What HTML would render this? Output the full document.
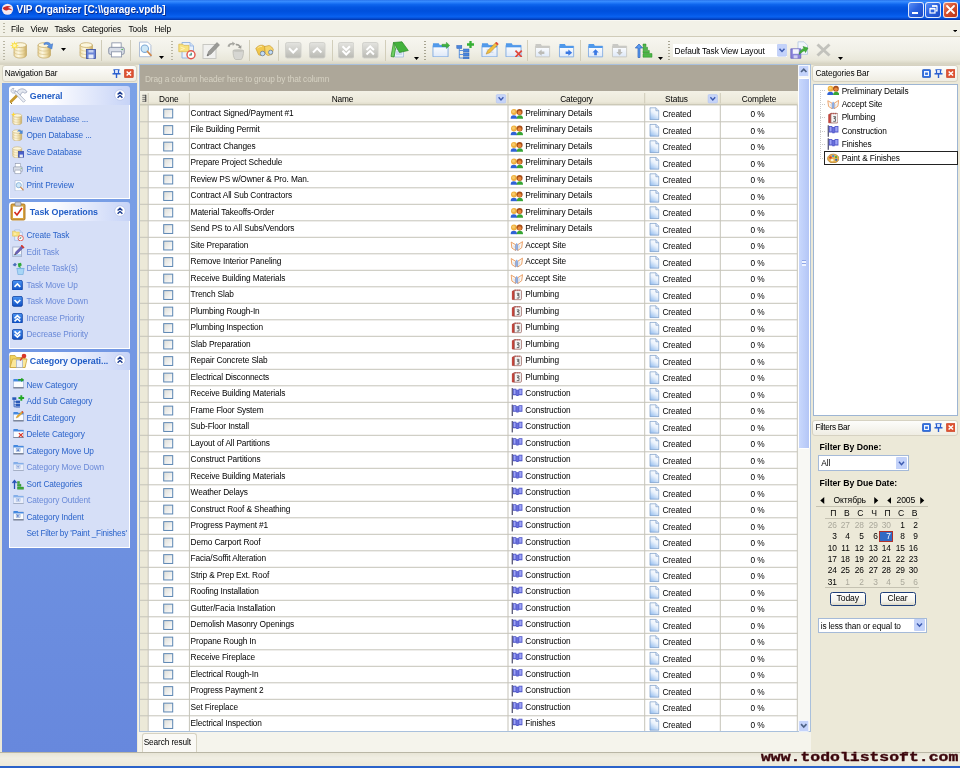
<!DOCTYPE html><html><head><meta charset="utf-8"><title>VIP Organizer</title>
<style>
*{box-sizing:border-box;margin:0;padding:0}
html,body{width:960px;height:768px;overflow:hidden;background:#ece9d8}
body{font-family:"Liberation Sans",sans-serif;font-size:8.3px;color:#000;position:relative;letter-spacing:-0.12px}
.ab{position:absolute}
.t{position:absolute;white-space:nowrap;line-height:10px}
.lnk{color:#2a63ca}.dis{color:#6a8ad8}
.hl{position:absolute;height:1px;background:#c9c7ba}
.vl{position:absolute;width:1px;background:#c9c7ba}
.cb{position:absolute;width:10px;height:10px;border:1px solid #5580a8;background:linear-gradient(135deg,#dcdcd7,#ffffff)}
#root{position:absolute;left:0;top:0;width:960px;height:768px;will-change:transform;overflow:hidden}
</style></head><body><div id="root">

<svg width="0" height="0" style="position:absolute">
<defs>
<linearGradient id="gDb" x1="0" x2="1"><stop offset="0" stop-color="#f0deaa"/><stop offset=".35" stop-color="#fdf8e2"/><stop offset=".7" stop-color="#ecd9a2"/><stop offset="1" stop-color="#c9ac64"/></linearGradient>
<linearGradient id="gDoc" x1=".7" y1="0" x2=".2" y2="1"><stop offset="0" stop-color="#ffffff"/><stop offset=".45" stop-color="#eaf2fc"/><stop offset="1" stop-color="#98c0f0"/></linearGradient>
<linearGradient id="gCb" x1="0" y1="0" x2="1" y2="1"><stop offset="0" stop-color="#dcdcd6"/><stop offset="1" stop-color="#ffffff"/></linearGradient>
<linearGradient id="gBtnB" x1="0" y1="0" x2="0" y2="1"><stop offset="0" stop-color="#4a94f4"/><stop offset="1" stop-color="#0f50c4"/></linearGradient>
<linearGradient id="gBtnG" x1="0" y1="0" x2="0" y2="1"><stop offset="0" stop-color="#e4e4e0"/><stop offset="1" stop-color="#b9b9b3"/></linearGradient>
<symbol id="i-ct" viewBox="0 0 18 19"><path d="M4 1.500h8l3.500 3.500v12H4z" fill="#e9f1fc" stroke="#8fb0e0" stroke-width=".9"/><path d="M12 1.500V5h3.500" fill="#cfe0f6" stroke="#8fb0e0" stroke-width=".7"/><path d="M.8 3.200h4l1 1.200h5.200v6.300H.8z" fill="#f8e27e" stroke="#d8b648" stroke-width=".7"/><path d="M2.500 6l4 1.500-4 1.500" fill="none" stroke="#fdf4c0" stroke-width="1"/><circle cx="13" cy="13.800" r="4" fill="#fff" stroke="#e2554a" stroke-width="1.400"/><path d="M13.200 11.800v2.200h-2" fill="none" stroke="#2f7a6a" stroke-width="1.100"/></symbol>
<symbol id="i-doc" viewBox="0 0 10 13"><path d="M.5.5h6l3 3v9h-9z" fill="url(#gDoc)" stroke="#7f9fc8" stroke-width=".9"/><path d="M6.5.5v3h3" fill="#dbe8f8" stroke="#7f9fc8" stroke-width=".7"/></symbol>
<symbol id="i-pd" viewBox="0 0 13 11"><path d="M.2 10.600c0-2.600 1.300-3.600 3.300-3.600s3.300 1 3.300 3.600z" fill="#2f62d6"/><path d="M6.400 10.600c0-2.600 1.200-3.600 3.100-3.600s3.300 1 3.300 3.600z" fill="#36a534"/><circle cx="3.700" cy="3.800" r="3" fill="#eeb040"/><circle cx="3.200" cy="3.300" r="1.500" fill="#f8cc6c"/><circle cx="9.300" cy="3.800" r="3" fill="#a84e18"/><circle cx="9.300" cy="4.500" r="1.900" fill="#e8863a"/></symbol>
<symbol id="i-as" viewBox="0 0 13 11"><path d="M.8 1.800 5.400 4.500v5.800L1.600 7.800z" fill="#fdf8f0" stroke="#e8975a" stroke-width=".9"/><path d="M12.200 1.400 7.400 4.500v5.800l4-2.800z" fill="#fdf8f0" stroke="#e8975a" stroke-width=".9"/><path d="M5.400 4.500 6.400 3l1 1.500v5.800l-1-1-1 1z" fill="#8fb2ea" stroke="#6c94d8" stroke-width=".4"/><path d="M3 4.800 4.600 6v2.400L3.400 7.500z" fill="#cfe0f8"/><path d="M9.800 4.600 8.200 6v2.400l1.400-1z" fill="#cfe0f8"/></symbol>
<symbol id="i-pl" viewBox="0 0 11 12"><path d="M.6 2.400 3 1.200v10L.6 11z" fill="#c8453c" stroke="#a8352c" stroke-width=".5"/><path d="M3 1.200h6.400c.6 0 1 .4 1 1v8c0 .6-.4 1-1 1H3z" fill="#f6f6f6" stroke="#8a4a44" stroke-width=".7"/><path d="M4 .6v1.600M6 .6v1.600M8 .6v1.600" stroke="#b03a32" stroke-width=".8"/><path d="M5.500 4.500h2.400v1.400H6.300v.8h1.600v2.800H5.500" fill="none" stroke="#444" stroke-width=".8"/></symbol>
<symbol id="i-fl" viewBox="0 0 12 12"><rect x=".7" y=".3" width="1.100" height="11.500" fill="#3a3a5c"/><path d="M1.800 1h3.500v.9h2.300V1h3.800v6.400H7.600v.9H5.300v-.9H1.800z" fill="#4a50c4"/><path d="M2.600 1.800h2v4.800h-2zM8.200 1.800h2.400v4.800H8.200z" fill="#9da3f6"/><path d="M5.300 2.500h2.300v5H5.300z" fill="#6a70dc"/></symbol>
<symbol id="i-pa" viewBox="0 0 13 11"><ellipse cx="6.5" cy="5.8" rx="6" ry="4.6" fill="#e8b252" stroke="#a87420" stroke-width=".7"/><circle cx="3.6" cy="4.6" r="1.3" fill="#d43a2a"/><circle cx="6.4" cy="3.2" r="1.2" fill="#3f8fdc"/><circle cx="9.4" cy="4.3" r="1.2" fill="#43a83c"/><circle cx="9.6" cy="7.2" r="1.2" fill="#2f5fb5"/><ellipse cx="5.4" cy="7.5" rx="1.6" ry="1.1" fill="#fff6dc"/></symbol>
<symbol id="i-db" viewBox="0 0 14 16"><path d="M1 3v9.800c0 1.500 2.700 2.700 6 2.700s6-1.200 6-2.700V3z" fill="url(#gDb)" stroke="#c4a862" stroke-width=".7"/><ellipse cx="7" cy="3" rx="6" ry="2.300" fill="#fcf6dc" stroke="#c4a862" stroke-width=".7"/><path d="M1 6.300c0 1.400 2.700 2.500 6 2.500s6-1.100 6-2.500M1 9.600c0 1.400 2.700 2.500 6 2.500s6-1.100 6-2.500" fill="none" stroke="#d2ba7c" stroke-width=".55"/></symbol>
<symbol id="i-pr" viewBox="0 0 16 15" preserveAspectRatio="none"><rect x="3.6" y=".8" width="8.8" height="5.4" fill="#fff" stroke="#8a93a8" stroke-width=".8"/><rect x=".7" y="5" width="14.6" height="6.6" rx="1.6" fill="#d9dee8" stroke="#7b859c" stroke-width=".8"/><rect x="3.2" y="9.2" width="9.6" height="4.8" fill="#fff" stroke="#8a93a8" stroke-width=".8"/><circle cx="13.3" cy="7" r=".7" fill="#3fae3c"/></symbol>
<symbol id="i-pv" viewBox="0 0 15 16"><path d="M1.5.6h8.2l3.2 3.2v11.4H1.5z" fill="#fff" stroke="#9db0cf" stroke-width=".8"/><circle cx="6.8" cy="7.2" r="3.7" fill="#cfe8f7" stroke="#7da9d6" stroke-width="1.1"/><path d="M9.5 10 13 13.8" stroke="#d08a4c" stroke-width="1.8" stroke-linecap="round"/></symbol>
<symbol id="i-fold" viewBox="0 0 14 12"><path d="M.6 2.6h12.8v8.8H.6z" fill="#fff" stroke="#6d92c9" stroke-width=".8"/><path d="M.6 1.2h5.2l1 1.4H.6z" fill="#3f7ad6"/><path d="M.6 2.6h12.8v1.6H.6z" fill="#3f7ad6"/></symbol>
<symbol id="i-sqb" viewBox="0 0 12 12"><rect x=".5" y=".5" width="11" height="11" rx="1.6" fill="url(#gBtnB)" stroke="#1848a8" stroke-width=".8"/></symbol>
<symbol id="i-sqg" viewBox="0 0 12 12"><rect x=".5" y=".5" width="11" height="11" rx="1.6" fill="url(#gBtnG)" stroke="#a5a59e" stroke-width=".8"/></symbol>
</defs></svg>

<div class="ab" style="left:0;top:0;width:960px;height:19.500px;background:linear-gradient(#2670ea 0%,#3a8eff 6%,#2a80fb 12%,#0f66ee 22%,#0356e2 36%,#0050dc 55%,#0256e6 70%,#0a62f0 84%,#0650d8 91%,#0234a8 100%)"></div>
<svg class="ab" style="left:1.200px;top:2.800px" width="13" height="12.500" viewBox="0 0 13 13"><circle cx="6.500" cy="6.500" r="5.800" fill="#f6e9ee"/><path d="M1.5 5.5c2-2.6 6-3.4 9.5-1.2-1.6-.2-3 .1-4 .9 2 .2 3.6 1 4.6 2.6-1.8-.9-3.6-1-5.2-.3-1.8.8-3.4.2-4.9-2z" fill="#cc2a2a"/></svg>
<div class="t" style="left:16.500px;top:4px;font-size:10px;line-height:12px;font-weight:bold;color:#fff;letter-spacing:-0.040px;text-shadow:0.7px 0.7px 0 #0a2a8a">VIP Organizer [C:\\garage.vpdb]</div>
<div class="ab" style="left:908px;top:1.500px;width:15.700px;height:16.200px;border:1px solid rgba(255,255,255,.85);border-radius:3px;background:linear-gradient(135deg,#5a8ff5,#2a62e0 45%,#1b4ac4)"></div>
<div class="ab" style="left:925.3px;top:1.500px;width:15.700px;height:16.200px;border:1px solid rgba(255,255,255,.85);border-radius:3px;background:linear-gradient(135deg,#5a8ff5,#2a62e0 45%,#1b4ac4)"></div>
<div class="ab" style="left:942.7px;top:1.500px;width:15.700px;height:16.200px;border:1px solid rgba(255,255,255,.85);border-radius:3px;background:linear-gradient(135deg,#e9866a,#d4502e 45%,#b9351a)"></div>
<div class="ab" style="left:912px;top:11.500px;width:6px;height:2.500px;background:#fff"></div>
<svg class="ab" style="left:925.800px;top:2px" width="15" height="15" viewBox="0 0 15 15"><path d="M6 4.2h5v4.6H9.6" fill="none" stroke="#fff" stroke-width="1.2"/><path d="M6 3.9h5" stroke="#fff" stroke-width="1.4"/><rect x="4" y="6.6" width="5" height="4.4" fill="none" stroke="#fff" stroke-width="1.2"/><path d="M4 6.6h5" stroke="#fff" stroke-width="1.6"/></svg>
<svg class="ab" style="left:943.100px;top:2.100px" width="15" height="15" viewBox="0 0 15 15"><path d="M4 4l7 7M11 4l-7 7" stroke="#fff" stroke-width="1.800" stroke-linecap="round"/></svg>
<div class="ab" style="left:0;top:19.500px;width:960px;height:16.500px;background:#f2f1e7"></div>
<div class="ab" style="left:0;top:35.500px;width:960px;height:1px;background:#d0ccb9"></div><div class="ab" style="left:0;top:19.500px;width:960px;height:1px;background:#f9f8f2"></div>
<div class="ab" style="left:3px;top:23px;width:2px;height:11px;background:repeating-linear-gradient(#b9b6a4 0 1px,transparent 1px 3px)"></div>
<div class="t" style="left:11px;top:23.5px">File</div>
<div class="t" style="left:30.5px;top:23.5px">View</div>
<div class="t" style="left:54.5px;top:23.5px">Tasks</div>
<div class="t" style="left:82px;top:23.5px">Categories</div>
<div class="t" style="left:128.5px;top:23.5px">Tools</div>
<div class="t" style="left:154.5px;top:23.5px">Help</div>
<svg class="ab" style="left:952.500px;top:30px" width="4.200" height="2.300" viewBox="0 0 6 3.200"><path d="M0 0h6L3 3.200z" fill="#000"/></svg>
<div class="ab" style="left:0;top:37px;width:960px;height:26.500px;background:linear-gradient(#f7f6f0,#f1f0e7 50%,#e9e7da 85%,#d6d3c2)"></div>
<div class="ab" style="left:0;top:63.500px;width:960px;height:1.500px;background:linear-gradient(#cdc9b6,#e4e1d2)"></div>
<div class="ab" style="left:3px;top:41px;width:2px;height:19px;background:repeating-linear-gradient(#b9b6a4 0 1px,transparent 1px 3px)"></div>
<svg class="ab" style="left:12.5px;top:40.8px" width="14.5" height="18.5" ><use href="#i-db"/></svg>
<svg class="ab" style="left:9.500px;top:40.500px" width="9" height="9" viewBox="0 0 9 9"><path d="M4.500 0l.8 2.400L7.700 1.300 6.600 3.700 9 4.500l-2.400.8 1.100 2.400-2.400-1.100L4.500 9l-.8-2.400-2.400 1.100 1.100-2.400L0 4.500l2.400-.8L1.300 1.300l2.400 1.100z" fill="#fbe04a"/><circle cx="4.500" cy="4.500" r="1.600" fill="#fff6b0"/></svg>
<svg class="ab" style="left:36.5px;top:40.8px" width="14.5" height="18.5" ><use href="#i-db"/></svg>
<svg class="ab" style="left:43px;top:40.500px" width="10.500" height="10" viewBox="0 0 10.500 10"><path d="M.8 2.600C3.200.6 6.200 1 8 3.500l1.700-.8-.9 5.300L4.300 5.800l1.700-.9C4.800 3.200 3 2.600 1.200 3.800z" fill="#5a92e0" stroke="#3a6cc0" stroke-width=".5"/></svg>
<svg class="ab" style="left:61px;top:48px" width="5" height="3" viewBox="0 0 5 3"><path d="M0 0h5L2.500 3z" fill="#000"/></svg>
<svg class="ab" style="left:79px;top:40.8px" width="14.5" height="18.5" ><use href="#i-db"/></svg>
<svg class="ab" style="left:86px;top:49px" width="10" height="10" viewBox="0 0 10 10"><rect x=".5" y=".5" width="9" height="9" fill="#6d86d8" stroke="#3b4fa0" stroke-width=".8"/><rect x="2.500" y="5.500" width="5" height="4" fill="#e8ecf8"/><rect x="2.500" y="1" width="5" height="2.500" fill="#c5d0f0"/></svg>
<div class="vl" style="left:101px;top:40px;height:21px;background:#cfcbb8"></div>
<svg class="ab" style="left:108px;top:42px" width="17" height="16" ><use href="#i-pr"/></svg>
<div class="vl" style="left:130px;top:40px;height:21px;background:#cfcbb8"></div>
<svg class="ab" style="left:138px;top:41px" width="15" height="17" ><use href="#i-pv"/></svg>
<svg class="ab" style="left:159px;top:56px" width="5" height="3" viewBox="0 0 5 3"><path d="M0 0h5L2.500 3z" fill="#000"/></svg>
<div class="ab" style="left:171px;top:41px;width:2px;height:19px;background:repeating-linear-gradient(#b9b6a4 0 1px,transparent 1px 3px)"></div>
<div class="ab" style="left:2px;top:65px;width:135px;height:17px;border:1px solid #d6d2c2;border-radius:3px;background:linear-gradient(#fdfdfb,#efede3)"></div><div class="t" style="left:4.7px;top:68px">Navigation Bar</div>
<svg class="ab" style="left:112.2px;top:68.7px" width="9" height="9.500" viewBox="0 0 9 9.500"><path d="M1.400 .9h6.200" fill="none" stroke="#2a5fcf" stroke-width="1.300"/><path d="M2.500 1v3.500h4V1" fill="#dfe8fb" stroke="#2a5fcf" stroke-width="1.200"/><path d="M.5 4.800h8" stroke="#2a5fcf" stroke-width="1.500"/><path d="M4.500 5v4.300" fill="none" stroke="#2a5fcf" stroke-width="1.400"/></svg>
<svg class="ab" style="left:124px;top:69px" width="9.700" height="9" viewBox="0 0 10 10" preserveAspectRatio="none"><rect x=".3" y=".3" width="9.400" height="9.400" rx="1.200" fill="#de5232" stroke="#c23a1c" stroke-width=".6"/><path d="M2.700 2.700l4.600 4.600M7.300 2.700l-4.600 4.600" stroke="#fff" stroke-width="1.500"/></svg>
<div class="ab" style="left:2px;top:83px;width:135px;height:669px;background:linear-gradient(#7ba2e7,#6788dd)"></div>
<div class="ab" style="left:9px;top:86.3px;width:121px;height:18.500px;border-radius:3px 3px 0 0;background:linear-gradient(90deg,#ffffff 0%,#fdfdff 35%,#c6d3f7 100%)"></div><div class="ab" style="left:9px;top:104.8px;width:121px;height:94.2px;background:#d6dff7;border:1px solid #fff;border-top:none"></div><div class="t" style="left:29.800px;top:91.0px;font-weight:bold;color:#215dc6;font-size:8.900px;letter-spacing:-0.050px">General</div><svg class="ab" style="left:113.500px;top:88.8px" width="12" height="12" viewBox="0 0 12 12"><circle cx="6" cy="6" r="5.300" fill="#fff" stroke="#b5c3ea" stroke-width=".8"/><path d="M3.600 5.600 6 3.200l2.400 2.400M3.600 8.800 6 6.400l2.400 2.400" fill="none" stroke="#1c3c90" stroke-width="1.400"/></svg>
<svg class="ab" style="left:8.500px;top:86.500px" width="19" height="19" viewBox="0 0 19 19"><path d="M2 14.500 8.500 8" stroke="#c89a2e" stroke-width="2.800" stroke-linecap="round"/><path d="M1.500 15.500 3 17" stroke="#8a6a18" stroke-width="1"/><path d="M7.500 5.500c1.500-3 4.500-4.300 7.500-3.300 1.500.5 2.600 1.600 3 2.800l-2.200 1.300c-.8-.9-1.800-1.300-2.800-1l-2.300 3.700z" fill="#e4e8f0" stroke="#8f9ab4" stroke-width=".7"/><path d="M5 5.500l9.500 9.800 1.800-1.800L7 4z" fill="#eef1f6" stroke="#9aa4bc" stroke-width=".7"/><path d="M2 3.500c0-1.500 1.500-2.500 3-2l-1.200 1.600 1 1.200 1.800-.8c.3 1.500-1 2.800-2.500 2.600-1.200-.2-2.100-1.300-2.100-2.600z" fill="#eef1f6" stroke="#9aa4bc" stroke-width=".7"/></svg>
<div class="t lnk" style="left:26.500px;top:114px">New Database ...</div>
<svg class="ab" style="left:12.2px;top:112.7px" width="10.5" height="12.5" ><use href="#i-db"/></svg>
<div class="t lnk" style="left:26.500px;top:130px">Open Database ...</div>
<svg class="ab" style="left:12.2px;top:128.7px" width="10.5" height="12.5" ><use href="#i-db"/></svg>
<div class="t lnk" style="left:26.500px;top:147px">Save Database</div>
<svg class="ab" style="left:12.2px;top:145.7px" width="10.5" height="12.5" ><use href="#i-db"/></svg>
<div class="t lnk" style="left:26.500px;top:164px">Print</div>
<svg class="ab" style="left:13px;top:163.2px" width="9.8" height="11.5" preserveAspectRatio="none"><use href="#i-pr"/></svg>
<div class="t lnk" style="left:26.500px;top:180px">Print Preview</div>
<svg class="ab" style="left:13.5px;top:179.8px" width="10.5" height="11.5" ><use href="#i-pv"/></svg>
<svg class="ab" style="left:10.500px;top:112px" width="5" height="5" viewBox="0 0 8 8"><path d="M4 0l1 2.800L8 4 5 5.200 4 8 3 5.200 0 4l3-1.200z" fill="#ffd93a"/></svg>
<svg class="ab" style="left:17px;top:128.500px" width="6" height="6" viewBox="0 0 10 10"><path d="M.5 4c2-3 5-3 6.500-.5L9 2.500v5H4l2-1.800C5 4 3 3.500 .5 4z" fill="#4f8fe0" stroke="#2b62b8" stroke-width=".5"/></svg>
<svg class="ab" style="left:17.500px;top:151px" width="6.500" height="6.500" viewBox="0 0 10 10"><rect x=".5" y=".5" width="9" height="9" fill="#4a5fc8" stroke="#2b3f90" stroke-width=".8"/><rect x="2.500" y="5.500" width="5" height="4" fill="#e8ecf8"/></svg>
<div class="ab" style="left:9px;top:202.3px;width:121px;height:18.500px;border-radius:3px 3px 0 0;background:linear-gradient(90deg,#ffffff 0%,#fdfdff 35%,#c6d3f7 100%)"></div><div class="ab" style="left:9px;top:220.8px;width:121px;height:128.2px;background:#d6dff7;border:1px solid #fff;border-top:none"></div><div class="t" style="left:29.800px;top:207.0px;font-weight:bold;color:#215dc6;font-size:8.900px;letter-spacing:-0.050px">Task Operations</div><svg class="ab" style="left:113.500px;top:204.8px" width="12" height="12" viewBox="0 0 12 12"><circle cx="6" cy="6" r="5.300" fill="#fff" stroke="#b5c3ea" stroke-width=".8"/><path d="M3.600 5.600 6 3.200l2.400 2.400M3.600 8.800 6 6.400l2.400 2.400" fill="none" stroke="#1c3c90" stroke-width="1.400"/></svg>
<svg class="ab" style="left:9.500px;top:201px" width="16" height="20" viewBox="0 0 16 20"><rect x="1" y="3" width="14" height="16" rx="1.200" fill="#d9a441" stroke="#a87420" stroke-width=".9"/><rect x="3" y="5.500" width="10" height="11.500" fill="#fff"/><rect x="5" y="1" width="6" height="4" rx="1" fill="#c9ccd4" stroke="#777" stroke-width=".6"/><path d="M4.500 11l2.500 3 5-7" fill="none" stroke="#d22a1c" stroke-width="1.600"/></svg>
<div class="t lnk" style="left:26.500px;top:230px">Create Task</div>
<div class="t dis" style="left:26.500px;top:247px">Edit Task</div>
<div class="t dis" style="left:26.500px;top:263px">Delete Task(s)</div>
<div class="t dis" style="left:26.500px;top:280px">Task Move Up</div>
<div class="t dis" style="left:26.500px;top:296px">Task Move Down</div>
<div class="t dis" style="left:26.500px;top:313px">Increase Priority</div>
<div class="t dis" style="left:26.500px;top:329px">Decrease Priority</div>
<svg class="ab" style="left:11.8px;top:228.5px" width="12" height="12.7" ><use href="#i-ct"/></svg>
<svg class="ab" style="left:12px;top:245px" width="12.500" height="12.500" viewBox="0 0 12.500 12.500"><rect x=".8" y="2" width="8.600" height="9.600" fill="#f7f9fd" stroke="#9aa6c4" stroke-width=".8"/><rect x="1.200" y="9" width="7.800" height="2.200" fill="#b8d4f2"/><path d="M2.500 10 3.600 7 9.800 .8l1.700 1.700L5.300 8.700z" fill="#6a62b8" stroke="#4a4488" stroke-width=".4"/><path d="M2.500 10l1.600-.5-1-1z" fill="#7a5a2a"/><path d="M9.800 .8l1.700 1.700" stroke="#d8372a" stroke-width="1.700" stroke-linecap="round"/></svg>
<svg class="ab" style="left:11.500px;top:261.500px" width="13" height="13" viewBox="0 0 13 13"><path d="M5 6.500h7l-.9 6H5.900z" fill="#a8d6f6" stroke="#6aa6dc" stroke-width=".6"/><path d="M4.600 6.500h7.800" stroke="#7ab2e2" stroke-width="1.100"/><path d="M.5 3 3 .8l1.800 1.700L3.200 4.400z" fill="#4a6eb8"/><path d="M5.800 1.500 9 .8l.8 2.800-1.500.5.500 1.800-2.400-.8z" fill="#2fa83a"/></svg>
<svg class="ab" style="left:12.3px;top:279.5px" width="10.800" height="10.800" viewBox="0 0 12 12"><rect x=".5" y=".5" width="11" height="11" rx="1.500" fill="url(#gBtnB)" stroke="#0d3f9e" stroke-width=".9"/><path d="M2.800 7.600 6 4.400l3.200 3.200" fill="none" stroke="#fff" stroke-width="1.800"/></svg>
<svg class="ab" style="left:12.3px;top:296px" width="10.800" height="10.800" viewBox="0 0 12 12"><rect x=".5" y=".5" width="11" height="11" rx="1.500" fill="url(#gBtnB)" stroke="#0d3f9e" stroke-width=".9"/><path d="M2.800 4.400 6 7.600l3.200-3.200" fill="none" stroke="#fff" stroke-width="1.800"/></svg>
<svg class="ab" style="left:12.3px;top:312.6px" width="10.800" height="10.800" viewBox="0 0 12 12"><rect x=".5" y=".5" width="11" height="11" rx="1.500" fill="url(#gBtnB)" stroke="#0d3f9e" stroke-width=".9"/><path d="M2.800 6 6 3 9.200 6M2.800 9.400 6 6.400l3.200 3" fill="none" stroke="#fff" stroke-width="1.800"/></svg>
<svg class="ab" style="left:12.3px;top:329.2px" width="10.800" height="10.800" viewBox="0 0 12 12"><rect x=".5" y=".5" width="11" height="11" rx="1.500" fill="url(#gBtnB)" stroke="#0d3f9e" stroke-width=".9"/><path d="M2.800 2.600 6 5.600l3.200-3M2.800 6 6 9l3.200-3" fill="none" stroke="#fff" stroke-width="1.800"/></svg>
<div class="ab" style="left:9px;top:351.5px;width:121px;height:18.500px;border-radius:3px 3px 0 0;background:linear-gradient(90deg,#ffffff 0%,#fdfdff 35%,#c6d3f7 100%)"></div><div class="ab" style="left:9px;top:370.0px;width:121px;height:177.5px;background:#d6dff7;border:1px solid #fff;border-top:none"></div><div class="t" style="left:29.800px;top:356.2px;font-weight:bold;color:#215dc6;font-size:8.900px;letter-spacing:-0.050px">Category Operati...</div><svg class="ab" style="left:113.500px;top:354.0px" width="12" height="12" viewBox="0 0 12 12"><circle cx="6" cy="6" r="5.300" fill="#fff" stroke="#b5c3ea" stroke-width=".8"/><path d="M3.600 5.600 6 3.200l2.400 2.400M3.600 8.800 6 6.400l2.400 2.400" fill="none" stroke="#1c3c90" stroke-width="1.400"/></svg>
<svg class="ab" style="left:9px;top:351px" width="19" height="19" viewBox="0 0 19 19"><path d="M1 4.500h5l1.500 2H16v10H1z" fill="#f3d45c" stroke="#c9a53c" stroke-width=".8"/><path d="M1 16.500 3.500 8H18l-2 8.500z" fill="#fbe89a" stroke="#c9a53c" stroke-width=".8"/><rect x="7.500" y="9" width="6" height="7.500" fill="#eef3fb" stroke="#8aa2cc" stroke-width=".6"/><circle cx="15" cy="5" r="2.300" fill="#d8372a"/><path d="M13.500 6.500 11 9.500" stroke="#d8372a" stroke-width="1.200"/></svg>
<div class="t lnk" style="left:26.500px;top:380px">New Category</div>
<div class="t lnk" style="left:26.500px;top:396px">Add Sub Category</div>
<div class="t lnk" style="left:26.500px;top:413px">Edit Category</div>
<div class="t lnk" style="left:26.500px;top:429px">Delete Category</div>
<div class="t lnk" style="left:26.500px;top:446px">Category Move Up</div>
<div class="t dis" style="left:26.500px;top:462px">Category Move Down</div>
<div class="t lnk" style="left:26.500px;top:479px">Sort Categories</div>
<div class="t dis" style="left:26.500px;top:495px">Category Outdent</div>
<div class="t lnk" style="left:26.500px;top:512px">Category Indent</div>
<div class="t lnk" style="left:26.500px;top:528px;letter-spacing:-0.200px">Set Filter by 'Paint _Finishes'</div>
<svg class="ab" style="left:12.5px;top:378.3px;opacity:1" width="11" height="10.600" viewBox="0 0 14 13.500"><path d="M.6 2.600h12.800v9.600H.6z" fill="#fbfcfe" stroke="#8aa4cc" stroke-width=".7"/><path d="M.4 12.600h13.200" stroke="#4a5060" stroke-width="1.100"/><path d="M.6 1.200h5.200l1 1.400H.6z" fill="#3f86e0"/><path d="M.6 2.600h12.800v1.800H.6z" fill="#3f86e0"/><path d="M6.500 1.300h4V-.6l3.800 2.900-3.800 2.900V3.300h-4z" fill="#22a022"/></svg>
<svg class="ab" style="left:12px;top:395px" width="12.500" height="12.500" viewBox="0 0 12.500 12.500"><g fill="#2a5ab8"><rect x=".3" y="2.300" width="4" height="2.600"/><rect x="3.800" y="5.600" width="4.200" height="2.400"/><rect x="3.800" y="8.600" width="4.200" height="2.400"/><rect x="3.800" y="11.400" width="4.200" height="1.100"/></g><path d="M2 4.800v7h2M2 6.800h2M2 9.800h2" stroke="#2a5ab8" stroke-width=".8" fill="none"/><path d="M9.300 .2v5.600M6.500 3h5.600" stroke="#22a828" stroke-width="1.900"/></svg>
<svg class="ab" style="left:12.5px;top:411.3px;opacity:1" width="11" height="10.600" viewBox="0 0 14 13.500"><path d="M.6 2.600h12.800v9.600H.6z" fill="#fbfcfe" stroke="#8aa4cc" stroke-width=".7"/><path d="M.4 12.600h13.200" stroke="#4a5060" stroke-width="1.100"/><path d="M.6 1.200h5.200l1 1.400H.6z" fill="#3f86e0"/><path d="M.6 2.600h12.800v1.800H.6z" fill="#3f86e0"/><path d="M4 9 5 6.500 11.500.5l1.500 1.500L6.500 8z" fill="#e8b030" stroke="#a86a10" stroke-width=".4"/><path d="M11.500.5 13 2" stroke="#d8372a" stroke-width="1.500"/></svg>
<svg class="ab" style="left:12.5px;top:427.8px;opacity:1" width="11" height="10.600" viewBox="0 0 14 13.500"><path d="M.6 2.600h12.800v9.600H.6z" fill="#fbfcfe" stroke="#8aa4cc" stroke-width=".7"/><path d="M.4 12.600h13.200" stroke="#4a5060" stroke-width="1.100"/><path d="M.6 1.200h5.200l1 1.400H.6z" fill="#3f86e0"/><path d="M.6 2.600h12.800v1.800H.6z" fill="#3f86e0"/><path d="M7.500 6.500l5 5M12.500 6.500l-5 5" stroke="#d8372a" stroke-width="1.500"/></svg>
<svg class="ab" style="left:12.5px;top:444.3px;opacity:1" width="11" height="10.600" viewBox="0 0 14 13.500"><path d="M.6 2.600h12.800v9.600H.6z" fill="#fbfcfe" stroke="#8aa4cc" stroke-width=".7"/><path d="M.4 12.600h13.200" stroke="#4a5060" stroke-width="1.100"/><path d="M.6 1.200h5.200l1 1.400H.6z" fill="#3f86e0"/><path d="M.6 2.600h12.800v1.800H.6z" fill="#3f86e0"/><rect x="4" y="5.500" width="5" height="4" fill="#dbe6f8" stroke="#6d92c9" stroke-width=".6"/><path d="M6.500 6.200 8 8.500H5z" fill="#2a55b8"/></svg>
<svg class="ab" style="left:12.5px;top:460.8px;opacity:0.55" width="11" height="10.600" viewBox="0 0 14 13.500"><path d="M.6 2.600h12.800v9.600H.6z" fill="#fbfcfe" stroke="#8aa4cc" stroke-width=".7"/><path d="M.4 12.600h13.200" stroke="#4a5060" stroke-width="1.100"/><path d="M.6 1.200h5.200l1 1.400H.6z" fill="#3f86e0"/><path d="M.6 2.600h12.800v1.800H.6z" fill="#3f86e0"/><rect x="4" y="5.500" width="5" height="4" fill="#dbe6f8" stroke="#6d92c9" stroke-width=".6"/><path d="M6.500 9 8 6.700H5z" fill="#2a55b8"/></svg>
<svg class="ab" style="left:11.500px;top:477.500px" width="12" height="12" viewBox="0 0 12 12"><path d="M2.500 11V3M.5 5l2-2.500L4.500 5" fill="none" stroke="#2a55b8" stroke-width="1.300"/><path d="M5.500 3.500h2v2h-2zM5.500 6.300h3.500v2H5.500zM5.500 9.100h6v2.200h-6z" fill="#3fae3c" stroke="#1f7a1c" stroke-width=".4"/></svg>
<svg class="ab" style="left:12.5px;top:493.8px;opacity:0.55" width="11" height="10.600" viewBox="0 0 14 13.500"><path d="M.6 2.600h12.800v9.600H.6z" fill="#fbfcfe" stroke="#8aa4cc" stroke-width=".7"/><path d="M.4 12.600h13.200" stroke="#4a5060" stroke-width="1.100"/><path d="M.6 1.200h5.200l1 1.400H.6z" fill="#3f86e0"/><path d="M.6 2.600h12.800v1.800H.6z" fill="#3f86e0"/><rect x="4" y="5.500" width="5" height="4" fill="#dbe6f8" stroke="#6d92c9" stroke-width=".6"/><path d="M5 7.500 7.500 6v3z" fill="#2a55b8"/></svg>
<svg class="ab" style="left:12.5px;top:510.3px;opacity:1" width="11" height="10.600" viewBox="0 0 14 13.500"><path d="M.6 2.600h12.800v9.600H.6z" fill="#fbfcfe" stroke="#8aa4cc" stroke-width=".7"/><path d="M.4 12.600h13.200" stroke="#4a5060" stroke-width="1.100"/><path d="M.6 1.200h5.200l1 1.400H.6z" fill="#3f86e0"/><path d="M.6 2.600h12.800v1.800H.6z" fill="#3f86e0"/><rect x="4" y="5.500" width="5" height="4" fill="#dbe6f8" stroke="#6d92c9" stroke-width=".6"/><path d="M8 7.500 5.500 6v3z" fill="#2a55b8"/></svg>
<div class="ab" style="left:138px;top:65px;width:673px;height:687px;background:#f5f4ec"></div>
<div class="ab" style="left:139px;top:64px;width:671.700px;height:668px;background:#fff;border:1px solid #a9c0dc"></div>
<div class="ab" style="left:140px;top:65px;width:657.500px;height:26px;background:#ada799"></div>
<div class="t" style="left:145px;top:74px;color:#d6d2c3">Drag a column header here to group by that column</div>
<div class="ab" style="left:140px;top:91px;width:657.500px;height:14px;background:linear-gradient(#f3f1e6,#ece9da 75%,#dedac8)"></div>
<div class="t" style="left:148.5px;width:40.5px;top:93.5px;text-align:center;">Done</div>
<div class="t" style="left:189px;width:307px;top:93.5px;text-align:center;">Name</div>
<div class="t" style="left:508px;width:137px;top:93.5px;text-align:center;">Category</div>
<div class="t" style="left:645px;width:63px;top:93.5px;text-align:center;">Status</div>
<div class="t" style="left:720.5px;width:77.0px;top:93.5px;text-align:center;">Complete</div>
<div class="ab" style="left:140px;top:105px;width:8px;height:626px;background:#ece9d8"></div>
<div class="t" style="left:190.600px;top:107.65px">Contract Signed/Payment #1</div>
<div class="t" style="left:525.300px;top:107.65px">Preliminary Details</div>
<div class="t" style="left:662.500px;top:109.45px">Created</div>
<div class="t" style="left:719px;width:77px;top:109.45px;text-align:center;">0 %</div>
<div class="t" style="left:190.600px;top:124.15px">File Building Permit</div>
<div class="t" style="left:525.300px;top:124.15px">Preliminary Details</div>
<div class="t" style="left:662.500px;top:125.95px">Created</div>
<div class="t" style="left:719px;width:77px;top:125.95px;text-align:center;">0 %</div>
<div class="t" style="left:190.600px;top:140.65px">Contract Changes</div>
<div class="t" style="left:525.300px;top:140.65px">Preliminary Details</div>
<div class="t" style="left:662.500px;top:142.45px">Created</div>
<div class="t" style="left:719px;width:77px;top:142.45px;text-align:center;">0 %</div>
<div class="t" style="left:190.600px;top:157.15px">Prepare Project Schedule</div>
<div class="t" style="left:525.300px;top:157.15px">Preliminary Details</div>
<div class="t" style="left:662.500px;top:158.95px">Created</div>
<div class="t" style="left:719px;width:77px;top:158.95px;text-align:center;">0 %</div>
<div class="t" style="left:190.600px;top:173.65px">Review PS w/Owner &amp; Pro. Man.</div>
<div class="t" style="left:525.300px;top:173.65px">Preliminary Details</div>
<div class="t" style="left:662.500px;top:175.45px">Created</div>
<div class="t" style="left:719px;width:77px;top:175.45px;text-align:center;">0 %</div>
<div class="t" style="left:190.600px;top:190.15px">Contract All Sub Contractors</div>
<div class="t" style="left:525.300px;top:190.15px">Preliminary Details</div>
<div class="t" style="left:662.500px;top:191.95px">Created</div>
<div class="t" style="left:719px;width:77px;top:191.95px;text-align:center;">0 %</div>
<div class="t" style="left:190.600px;top:206.65px">Material Takeoffs-Order</div>
<div class="t" style="left:525.300px;top:206.65px">Preliminary Details</div>
<div class="t" style="left:662.500px;top:208.45px">Created</div>
<div class="t" style="left:719px;width:77px;top:208.45px;text-align:center;">0 %</div>
<div class="t" style="left:190.600px;top:223.15px">Send PS to All Subs/Vendors</div>
<div class="t" style="left:525.300px;top:223.15px">Preliminary Details</div>
<div class="t" style="left:662.500px;top:224.95px">Created</div>
<div class="t" style="left:719px;width:77px;top:224.95px;text-align:center;">0 %</div>
<div class="t" style="left:190.600px;top:239.65px">Site Preparation</div>
<div class="t" style="left:525.300px;top:239.65px">Accept Site</div>
<div class="t" style="left:662.500px;top:241.45px">Created</div>
<div class="t" style="left:719px;width:77px;top:241.45px;text-align:center;">0 %</div>
<div class="t" style="left:190.600px;top:256.15px">Remove Interior Paneling</div>
<div class="t" style="left:525.300px;top:256.15px">Accept Site</div>
<div class="t" style="left:662.500px;top:257.95px">Created</div>
<div class="t" style="left:719px;width:77px;top:257.95px;text-align:center;">0 %</div>
<div class="t" style="left:190.600px;top:272.65px">Receive Building Materials</div>
<div class="t" style="left:525.300px;top:272.65px">Accept Site</div>
<div class="t" style="left:662.500px;top:274.45px">Created</div>
<div class="t" style="left:719px;width:77px;top:274.45px;text-align:center;">0 %</div>
<div class="t" style="left:190.600px;top:289.15px">Trench Slab</div>
<div class="t" style="left:525.300px;top:289.15px">Plumbing</div>
<div class="t" style="left:662.500px;top:290.95px">Created</div>
<div class="t" style="left:719px;width:77px;top:290.95px;text-align:center;">0 %</div>
<div class="t" style="left:190.600px;top:305.65px">Plumbing Rough-In</div>
<div class="t" style="left:525.300px;top:305.65px">Plumbing</div>
<div class="t" style="left:662.500px;top:307.45px">Created</div>
<div class="t" style="left:719px;width:77px;top:307.45px;text-align:center;">0 %</div>
<div class="t" style="left:190.600px;top:322.15px">Plumbing Inspection</div>
<div class="t" style="left:525.300px;top:322.15px">Plumbing</div>
<div class="t" style="left:662.500px;top:323.95px">Created</div>
<div class="t" style="left:719px;width:77px;top:323.95px;text-align:center;">0 %</div>
<div class="t" style="left:190.600px;top:338.65px">Slab Preparation</div>
<div class="t" style="left:525.300px;top:338.65px">Plumbing</div>
<div class="t" style="left:662.500px;top:340.45px">Created</div>
<div class="t" style="left:719px;width:77px;top:340.45px;text-align:center;">0 %</div>
<div class="t" style="left:190.600px;top:355.15px">Repair Concrete Slab</div>
<div class="t" style="left:525.300px;top:355.15px">Plumbing</div>
<div class="t" style="left:662.500px;top:356.95px">Created</div>
<div class="t" style="left:719px;width:77px;top:356.95px;text-align:center;">0 %</div>
<div class="t" style="left:190.600px;top:371.65px">Electrical Disconnects</div>
<div class="t" style="left:525.300px;top:371.65px">Plumbing</div>
<div class="t" style="left:662.500px;top:373.45px">Created</div>
<div class="t" style="left:719px;width:77px;top:373.45px;text-align:center;">0 %</div>
<div class="t" style="left:190.600px;top:388.15px">Receive Building Materials</div>
<div class="t" style="left:525.300px;top:388.15px">Construction</div>
<div class="t" style="left:662.500px;top:389.95px">Created</div>
<div class="t" style="left:719px;width:77px;top:389.95px;text-align:center;">0 %</div>
<div class="t" style="left:190.600px;top:404.65px">Frame Floor System</div>
<div class="t" style="left:525.300px;top:404.65px">Construction</div>
<div class="t" style="left:662.500px;top:406.45px">Created</div>
<div class="t" style="left:719px;width:77px;top:406.45px;text-align:center;">0 %</div>
<div class="t" style="left:190.600px;top:421.15px">Sub-Floor Install</div>
<div class="t" style="left:525.300px;top:421.15px">Construction</div>
<div class="t" style="left:662.500px;top:422.95px">Created</div>
<div class="t" style="left:719px;width:77px;top:422.95px;text-align:center;">0 %</div>
<div class="t" style="left:190.600px;top:437.65px">Layout of All Partitions</div>
<div class="t" style="left:525.300px;top:437.65px">Construction</div>
<div class="t" style="left:662.500px;top:439.45px">Created</div>
<div class="t" style="left:719px;width:77px;top:439.45px;text-align:center;">0 %</div>
<div class="t" style="left:190.600px;top:454.15px">Construct Partitions</div>
<div class="t" style="left:525.300px;top:454.15px">Construction</div>
<div class="t" style="left:662.500px;top:455.95px">Created</div>
<div class="t" style="left:719px;width:77px;top:455.95px;text-align:center;">0 %</div>
<div class="t" style="left:190.600px;top:470.65px">Receive Building Materials</div>
<div class="t" style="left:525.300px;top:470.65px">Construction</div>
<div class="t" style="left:662.500px;top:472.45px">Created</div>
<div class="t" style="left:719px;width:77px;top:472.45px;text-align:center;">0 %</div>
<div class="t" style="left:190.600px;top:487.15px">Weather Delays</div>
<div class="t" style="left:525.300px;top:487.15px">Construction</div>
<div class="t" style="left:662.500px;top:488.95px">Created</div>
<div class="t" style="left:719px;width:77px;top:488.95px;text-align:center;">0 %</div>
<div class="t" style="left:190.600px;top:503.65px">Construct Roof &amp; Sheathing</div>
<div class="t" style="left:525.300px;top:503.65px">Construction</div>
<div class="t" style="left:662.500px;top:505.45px">Created</div>
<div class="t" style="left:719px;width:77px;top:505.45px;text-align:center;">0 %</div>
<div class="t" style="left:190.600px;top:520.15px">Progress Payment #1</div>
<div class="t" style="left:525.300px;top:520.15px">Construction</div>
<div class="t" style="left:662.500px;top:521.95px">Created</div>
<div class="t" style="left:719px;width:77px;top:521.95px;text-align:center;">0 %</div>
<div class="t" style="left:190.600px;top:536.65px">Demo Carport Roof</div>
<div class="t" style="left:525.300px;top:536.65px">Construction</div>
<div class="t" style="left:662.500px;top:538.45px">Created</div>
<div class="t" style="left:719px;width:77px;top:538.45px;text-align:center;">0 %</div>
<div class="t" style="left:190.600px;top:553.15px">Facia/Soffit Alteration</div>
<div class="t" style="left:525.300px;top:553.15px">Construction</div>
<div class="t" style="left:662.500px;top:554.95px">Created</div>
<div class="t" style="left:719px;width:77px;top:554.95px;text-align:center;">0 %</div>
<div class="t" style="left:190.600px;top:569.65px">Strip &amp; Prep Ext. Roof</div>
<div class="t" style="left:525.300px;top:569.65px">Construction</div>
<div class="t" style="left:662.500px;top:571.45px">Created</div>
<div class="t" style="left:719px;width:77px;top:571.45px;text-align:center;">0 %</div>
<div class="t" style="left:190.600px;top:586.15px">Roofing Installation</div>
<div class="t" style="left:525.300px;top:586.15px">Construction</div>
<div class="t" style="left:662.500px;top:587.95px">Created</div>
<div class="t" style="left:719px;width:77px;top:587.95px;text-align:center;">0 %</div>
<div class="t" style="left:190.600px;top:602.65px">Gutter/Facia Installation</div>
<div class="t" style="left:525.300px;top:602.65px">Construction</div>
<div class="t" style="left:662.500px;top:604.45px">Created</div>
<div class="t" style="left:719px;width:77px;top:604.45px;text-align:center;">0 %</div>
<div class="t" style="left:190.600px;top:619.15px">Demolish Masonry Openings</div>
<div class="t" style="left:525.300px;top:619.15px">Construction</div>
<div class="t" style="left:662.500px;top:620.95px">Created</div>
<div class="t" style="left:719px;width:77px;top:620.95px;text-align:center;">0 %</div>
<div class="t" style="left:190.600px;top:635.65px">Propane Rough In</div>
<div class="t" style="left:525.300px;top:635.65px">Construction</div>
<div class="t" style="left:662.500px;top:637.45px">Created</div>
<div class="t" style="left:719px;width:77px;top:637.45px;text-align:center;">0 %</div>
<div class="t" style="left:190.600px;top:652.15px">Receive Fireplace</div>
<div class="t" style="left:525.300px;top:652.15px">Construction</div>
<div class="t" style="left:662.500px;top:653.95px">Created</div>
<div class="t" style="left:719px;width:77px;top:653.95px;text-align:center;">0 %</div>
<div class="t" style="left:190.600px;top:668.65px">Electrical Rough-In</div>
<div class="t" style="left:525.300px;top:668.65px">Construction</div>
<div class="t" style="left:662.500px;top:670.45px">Created</div>
<div class="t" style="left:719px;width:77px;top:670.45px;text-align:center;">0 %</div>
<div class="t" style="left:190.600px;top:685.15px">Progress Payment 2</div>
<div class="t" style="left:525.300px;top:685.15px">Construction</div>
<div class="t" style="left:662.500px;top:686.95px">Created</div>
<div class="t" style="left:719px;width:77px;top:686.95px;text-align:center;">0 %</div>
<div class="t" style="left:190.600px;top:701.65px">Set Fireplace</div>
<div class="t" style="left:525.300px;top:701.65px">Construction</div>
<div class="t" style="left:662.500px;top:703.45px">Created</div>
<div class="t" style="left:719px;width:77px;top:703.45px;text-align:center;">0 %</div>
<div class="t" style="left:190.600px;top:718.15px">Electrical Inspection</div>
<div class="t" style="left:525.300px;top:718.15px">Finishes</div>
<div class="t" style="left:662.500px;top:719.95px">Created</div>
<div class="t" style="left:719px;width:77px;top:719.95px;text-align:center;">0 %</div>
<svg class="ab" style="left:139px;top:65px" width="672" height="667" viewBox="139 65 672 667"><rect x="147.7" y="93" width="1" height="10.500" fill="#cfcbb8"/><rect x="188.9" y="93" width="1" height="10.500" fill="#cfcbb8"/><rect x="507.5" y="93" width="1" height="10.500" fill="#cfcbb8"/><rect x="644.2" y="93" width="1" height="10.500" fill="#cfcbb8"/><rect x="719.8" y="93" width="1" height="10.500" fill="#cfcbb8"/><g transform="translate(141.500,94.800)"><path d="M.8 .5h3.500M.8 2.500h3.500M.8 4.500h3.500M.8 6.500h3.500" stroke="#555" stroke-width=".8"/><path d="M4.300 0v7" stroke="#333" stroke-width="1"/></g><g transform="translate(496,94.3)"><rect x=".3" y=".3" width="9.400" height="8.400" rx="1" fill="#c6d4f8" stroke="#b4c5f2" stroke-width=".6"/><path d="M2.600 3l2.400 2.600L7.400 3" fill="none" stroke="#3c5ab0" stroke-width="1.400"/></g><g transform="translate(707.8,94.3)"><rect x=".3" y=".3" width="9.400" height="8.400" rx="1" fill="#c6d4f8" stroke="#b4c5f2" stroke-width=".6"/><path d="M2.600 3l2.400 2.600L7.400 3" fill="none" stroke="#3c5ab0" stroke-width="1.400"/></g><rect x="140" y="104.300" width="657.300" height="1.100" fill="#c4c1b0"/><rect x="140" y="121.30" width="657.300" height="1" fill="#c5c4b9"/><rect x="163.700" y="109.15" width="9" height="8.800" fill="url(#gCb)" stroke="#5c86b2" stroke-width="1"/><use href="#i-pd" x="510.300" y="108.25" width="13" height="11"/><use href="#i-doc" x="649.400" y="107.25" width="10" height="13"/><rect x="140" y="137.80" width="657.300" height="1" fill="#c5c4b9"/><rect x="163.700" y="125.65" width="9" height="8.800" fill="url(#gCb)" stroke="#5c86b2" stroke-width="1"/><use href="#i-pd" x="510.300" y="124.75" width="13" height="11"/><use href="#i-doc" x="649.400" y="123.75" width="10" height="13"/><rect x="140" y="154.30" width="657.300" height="1" fill="#c5c4b9"/><rect x="163.700" y="142.15" width="9" height="8.800" fill="url(#gCb)" stroke="#5c86b2" stroke-width="1"/><use href="#i-pd" x="510.300" y="141.25" width="13" height="11"/><use href="#i-doc" x="649.400" y="140.25" width="10" height="13"/><rect x="140" y="170.80" width="657.300" height="1" fill="#c5c4b9"/><rect x="163.700" y="158.65" width="9" height="8.800" fill="url(#gCb)" stroke="#5c86b2" stroke-width="1"/><use href="#i-pd" x="510.300" y="157.75" width="13" height="11"/><use href="#i-doc" x="649.400" y="156.75" width="10" height="13"/><rect x="140" y="187.30" width="657.300" height="1" fill="#c5c4b9"/><rect x="163.700" y="175.15" width="9" height="8.800" fill="url(#gCb)" stroke="#5c86b2" stroke-width="1"/><use href="#i-pd" x="510.300" y="174.25" width="13" height="11"/><use href="#i-doc" x="649.400" y="173.25" width="10" height="13"/><rect x="140" y="203.80" width="657.300" height="1" fill="#c5c4b9"/><rect x="163.700" y="191.65" width="9" height="8.800" fill="url(#gCb)" stroke="#5c86b2" stroke-width="1"/><use href="#i-pd" x="510.300" y="190.75" width="13" height="11"/><use href="#i-doc" x="649.400" y="189.75" width="10" height="13"/><rect x="140" y="220.30" width="657.300" height="1" fill="#c5c4b9"/><rect x="163.700" y="208.15" width="9" height="8.800" fill="url(#gCb)" stroke="#5c86b2" stroke-width="1"/><use href="#i-pd" x="510.300" y="207.25" width="13" height="11"/><use href="#i-doc" x="649.400" y="206.25" width="10" height="13"/><rect x="140" y="236.80" width="657.300" height="1" fill="#c5c4b9"/><rect x="163.700" y="224.65" width="9" height="8.800" fill="url(#gCb)" stroke="#5c86b2" stroke-width="1"/><use href="#i-pd" x="510.300" y="223.75" width="13" height="11"/><use href="#i-doc" x="649.400" y="222.75" width="10" height="13"/><rect x="140" y="253.30" width="657.300" height="1" fill="#c5c4b9"/><rect x="163.700" y="241.15" width="9" height="8.800" fill="url(#gCb)" stroke="#5c86b2" stroke-width="1"/><use href="#i-as" x="510.300" y="240.25" width="13" height="11"/><use href="#i-doc" x="649.400" y="239.25" width="10" height="13"/><rect x="140" y="269.80" width="657.300" height="1" fill="#c5c4b9"/><rect x="163.700" y="257.65" width="9" height="8.800" fill="url(#gCb)" stroke="#5c86b2" stroke-width="1"/><use href="#i-as" x="510.300" y="256.75" width="13" height="11"/><use href="#i-doc" x="649.400" y="255.75" width="10" height="13"/><rect x="140" y="286.30" width="657.300" height="1" fill="#c5c4b9"/><rect x="163.700" y="274.15" width="9" height="8.800" fill="url(#gCb)" stroke="#5c86b2" stroke-width="1"/><use href="#i-as" x="510.300" y="273.25" width="13" height="11"/><use href="#i-doc" x="649.400" y="272.25" width="10" height="13"/><rect x="140" y="302.80" width="657.300" height="1" fill="#c5c4b9"/><rect x="163.700" y="290.65" width="9" height="8.800" fill="url(#gCb)" stroke="#5c86b2" stroke-width="1"/><use href="#i-pl" x="511.500" y="288.75" width="10.500" height="12"/><use href="#i-doc" x="649.400" y="288.75" width="10" height="13"/><rect x="140" y="319.30" width="657.300" height="1" fill="#c5c4b9"/><rect x="163.700" y="307.15" width="9" height="8.800" fill="url(#gCb)" stroke="#5c86b2" stroke-width="1"/><use href="#i-pl" x="511.500" y="305.25" width="10.500" height="12"/><use href="#i-doc" x="649.400" y="305.25" width="10" height="13"/><rect x="140" y="335.80" width="657.300" height="1" fill="#c5c4b9"/><rect x="163.700" y="323.65" width="9" height="8.800" fill="url(#gCb)" stroke="#5c86b2" stroke-width="1"/><use href="#i-pl" x="511.500" y="321.75" width="10.500" height="12"/><use href="#i-doc" x="649.400" y="321.75" width="10" height="13"/><rect x="140" y="352.30" width="657.300" height="1" fill="#c5c4b9"/><rect x="163.700" y="340.15" width="9" height="8.800" fill="url(#gCb)" stroke="#5c86b2" stroke-width="1"/><use href="#i-pl" x="511.500" y="338.25" width="10.500" height="12"/><use href="#i-doc" x="649.400" y="338.25" width="10" height="13"/><rect x="140" y="368.80" width="657.300" height="1" fill="#c5c4b9"/><rect x="163.700" y="356.65" width="9" height="8.800" fill="url(#gCb)" stroke="#5c86b2" stroke-width="1"/><use href="#i-pl" x="511.500" y="354.75" width="10.500" height="12"/><use href="#i-doc" x="649.400" y="354.75" width="10" height="13"/><rect x="140" y="385.30" width="657.300" height="1" fill="#c5c4b9"/><rect x="163.700" y="373.15" width="9" height="8.800" fill="url(#gCb)" stroke="#5c86b2" stroke-width="1"/><use href="#i-pl" x="511.500" y="371.25" width="10.500" height="12"/><use href="#i-doc" x="649.400" y="371.25" width="10" height="13"/><rect x="140" y="401.80" width="657.300" height="1" fill="#c5c4b9"/><rect x="163.700" y="389.65" width="9" height="8.800" fill="url(#gCb)" stroke="#5c86b2" stroke-width="1"/><use href="#i-fl" x="511" y="387.75" width="12" height="12"/><use href="#i-doc" x="649.400" y="387.75" width="10" height="13"/><rect x="140" y="418.30" width="657.300" height="1" fill="#c5c4b9"/><rect x="163.700" y="406.15" width="9" height="8.800" fill="url(#gCb)" stroke="#5c86b2" stroke-width="1"/><use href="#i-fl" x="511" y="404.25" width="12" height="12"/><use href="#i-doc" x="649.400" y="404.25" width="10" height="13"/><rect x="140" y="434.80" width="657.300" height="1" fill="#c5c4b9"/><rect x="163.700" y="422.65" width="9" height="8.800" fill="url(#gCb)" stroke="#5c86b2" stroke-width="1"/><use href="#i-fl" x="511" y="420.75" width="12" height="12"/><use href="#i-doc" x="649.400" y="420.75" width="10" height="13"/><rect x="140" y="451.30" width="657.300" height="1" fill="#c5c4b9"/><rect x="163.700" y="439.15" width="9" height="8.800" fill="url(#gCb)" stroke="#5c86b2" stroke-width="1"/><use href="#i-fl" x="511" y="437.25" width="12" height="12"/><use href="#i-doc" x="649.400" y="437.25" width="10" height="13"/><rect x="140" y="467.80" width="657.300" height="1" fill="#c5c4b9"/><rect x="163.700" y="455.65" width="9" height="8.800" fill="url(#gCb)" stroke="#5c86b2" stroke-width="1"/><use href="#i-fl" x="511" y="453.75" width="12" height="12"/><use href="#i-doc" x="649.400" y="453.75" width="10" height="13"/><rect x="140" y="484.30" width="657.300" height="1" fill="#c5c4b9"/><rect x="163.700" y="472.15" width="9" height="8.800" fill="url(#gCb)" stroke="#5c86b2" stroke-width="1"/><use href="#i-fl" x="511" y="470.25" width="12" height="12"/><use href="#i-doc" x="649.400" y="470.25" width="10" height="13"/><rect x="140" y="500.80" width="657.300" height="1" fill="#c5c4b9"/><rect x="163.700" y="488.65" width="9" height="8.800" fill="url(#gCb)" stroke="#5c86b2" stroke-width="1"/><use href="#i-fl" x="511" y="486.75" width="12" height="12"/><use href="#i-doc" x="649.400" y="486.75" width="10" height="13"/><rect x="140" y="517.30" width="657.300" height="1" fill="#c5c4b9"/><rect x="163.700" y="505.15" width="9" height="8.800" fill="url(#gCb)" stroke="#5c86b2" stroke-width="1"/><use href="#i-fl" x="511" y="503.25" width="12" height="12"/><use href="#i-doc" x="649.400" y="503.25" width="10" height="13"/><rect x="140" y="533.80" width="657.300" height="1" fill="#c5c4b9"/><rect x="163.700" y="521.65" width="9" height="8.800" fill="url(#gCb)" stroke="#5c86b2" stroke-width="1"/><use href="#i-fl" x="511" y="519.75" width="12" height="12"/><use href="#i-doc" x="649.400" y="519.75" width="10" height="13"/><rect x="140" y="550.30" width="657.300" height="1" fill="#c5c4b9"/><rect x="163.700" y="538.15" width="9" height="8.800" fill="url(#gCb)" stroke="#5c86b2" stroke-width="1"/><use href="#i-fl" x="511" y="536.25" width="12" height="12"/><use href="#i-doc" x="649.400" y="536.25" width="10" height="13"/><rect x="140" y="566.80" width="657.300" height="1" fill="#c5c4b9"/><rect x="163.700" y="554.65" width="9" height="8.800" fill="url(#gCb)" stroke="#5c86b2" stroke-width="1"/><use href="#i-fl" x="511" y="552.75" width="12" height="12"/><use href="#i-doc" x="649.400" y="552.75" width="10" height="13"/><rect x="140" y="583.30" width="657.300" height="1" fill="#c5c4b9"/><rect x="163.700" y="571.15" width="9" height="8.800" fill="url(#gCb)" stroke="#5c86b2" stroke-width="1"/><use href="#i-fl" x="511" y="569.25" width="12" height="12"/><use href="#i-doc" x="649.400" y="569.25" width="10" height="13"/><rect x="140" y="599.80" width="657.300" height="1" fill="#c5c4b9"/><rect x="163.700" y="587.65" width="9" height="8.800" fill="url(#gCb)" stroke="#5c86b2" stroke-width="1"/><use href="#i-fl" x="511" y="585.75" width="12" height="12"/><use href="#i-doc" x="649.400" y="585.75" width="10" height="13"/><rect x="140" y="616.30" width="657.300" height="1" fill="#c5c4b9"/><rect x="163.700" y="604.15" width="9" height="8.800" fill="url(#gCb)" stroke="#5c86b2" stroke-width="1"/><use href="#i-fl" x="511" y="602.25" width="12" height="12"/><use href="#i-doc" x="649.400" y="602.25" width="10" height="13"/><rect x="140" y="632.80" width="657.300" height="1" fill="#c5c4b9"/><rect x="163.700" y="620.65" width="9" height="8.800" fill="url(#gCb)" stroke="#5c86b2" stroke-width="1"/><use href="#i-fl" x="511" y="618.75" width="12" height="12"/><use href="#i-doc" x="649.400" y="618.75" width="10" height="13"/><rect x="140" y="649.30" width="657.300" height="1" fill="#c5c4b9"/><rect x="163.700" y="637.15" width="9" height="8.800" fill="url(#gCb)" stroke="#5c86b2" stroke-width="1"/><use href="#i-fl" x="511" y="635.25" width="12" height="12"/><use href="#i-doc" x="649.400" y="635.25" width="10" height="13"/><rect x="140" y="665.80" width="657.300" height="1" fill="#c5c4b9"/><rect x="163.700" y="653.65" width="9" height="8.800" fill="url(#gCb)" stroke="#5c86b2" stroke-width="1"/><use href="#i-fl" x="511" y="651.75" width="12" height="12"/><use href="#i-doc" x="649.400" y="651.75" width="10" height="13"/><rect x="140" y="682.30" width="657.300" height="1" fill="#c5c4b9"/><rect x="163.700" y="670.15" width="9" height="8.800" fill="url(#gCb)" stroke="#5c86b2" stroke-width="1"/><use href="#i-fl" x="511" y="668.25" width="12" height="12"/><use href="#i-doc" x="649.400" y="668.25" width="10" height="13"/><rect x="140" y="698.80" width="657.300" height="1" fill="#c5c4b9"/><rect x="163.700" y="686.65" width="9" height="8.800" fill="url(#gCb)" stroke="#5c86b2" stroke-width="1"/><use href="#i-fl" x="511" y="684.75" width="12" height="12"/><use href="#i-doc" x="649.400" y="684.75" width="10" height="13"/><rect x="140" y="715.30" width="657.300" height="1" fill="#c5c4b9"/><rect x="163.700" y="703.15" width="9" height="8.800" fill="url(#gCb)" stroke="#5c86b2" stroke-width="1"/><use href="#i-fl" x="511" y="701.25" width="12" height="12"/><use href="#i-doc" x="649.400" y="701.25" width="10" height="13"/><rect x="163.700" y="719.65" width="9" height="8.800" fill="url(#gCb)" stroke="#5c86b2" stroke-width="1"/><use href="#i-fl" x="511" y="717.75" width="12" height="12"/><use href="#i-doc" x="649.400" y="717.75" width="10" height="13"/><rect x="147.7" y="105" width="1" height="626" fill="#c5c4b9"/><rect x="188.9" y="105" width="1" height="626" fill="#c5c4b9"/><rect x="507.5" y="105" width="1" height="626" fill="#c5c4b9"/><rect x="644.2" y="105" width="1" height="626" fill="#c5c4b9"/><rect x="719.8" y="105" width="1" height="626" fill="#c5c4b9"/><rect x="796.8" y="105" width="1" height="626" fill="#c5c4b9"/></svg>
<div class="ab" style="left:797.500px;top:65px;width:12.500px;height:666px;background:#f8f8f4"></div>
<div class="ab" style="left:797.600px;top:77.500px;width:12px;height:371px;background:linear-gradient(90deg,#c9d8fc,#bccdf9 60%,#b3c5f5);border:1px solid #fff;border-radius:1.500px"></div>
<div class="ab" style="left:801.500px;top:259.500px;width:4px;height:6px;background:repeating-linear-gradient(#8ea6e8 0 .75px,#eef3ff .75px 1.500px)"></div>
<svg class="ab" style="left:797.800px;top:64.8px" width="11.500" height="12" viewBox="0 0 11 12"><rect x=".4" y=".4" width="10.200" height="11.200" rx="1.400" fill="#c4d3fb" stroke="#fff" stroke-width=".8"/><path d="M2.800 7 5.500 4.200 8.200 7" fill="none" stroke="#4d6185" stroke-width="1.700"/></svg>
<svg class="ab" style="left:797.800px;top:719.5px" width="11.500" height="12" viewBox="0 0 11 12"><rect x=".4" y=".4" width="10.200" height="11.200" rx="1.400" fill="#c4d3fb" stroke="#fff" stroke-width=".8"/><path d="M2.800 4.200 5.500 7 8.200 4.200" fill="none" stroke="#4d6185" stroke-width="1.700"/></svg>
<div class="ab" style="left:141.500px;top:732.800px;width:55px;height:19.700px;border:1px solid #d6d2c2;border-bottom:none;border-radius:3px 3px 0 0;background:#faf9f5"></div>
<div class="t" style="left:143.700px;top:737px">Search result</div>
<div class="ab" style="left:0;top:752px;width:960px;height:1px;background:#b9b6a5"></div>
<div class="ab" style="left:0;top:753px;width:960px;height:13px;background:linear-gradient(#e8e5d6,#f0eee3 40%,#ece9d8)"></div>
<div class="ab" style="left:0;top:766px;width:960px;height:2px;background:#2a62c9"></div>
<div class="t" style="left:760.500px;top:751px;font-family:'Liberation Mono',monospace;font-weight:bold;font-size:12.500px;line-height:14px;color:#3c060c;letter-spacing:0;-webkit-text-stroke:0.350px #3c060c;transform-origin:0 50%;transform:scaleX(1.315)">www.todolistsoft.com</div>
<div class="ab" style="left:812px;top:65px;width:146px;height:16.5px;border:1px solid #d6d2c2;border-radius:3px;background:linear-gradient(#fdfdfb,#efede3)"></div><div class="t" style="left:815.5px;top:68px">Categories Bar</div>
<svg class="ab" style="left:922px;top:68.8px" width="9" height="9" viewBox="0 0 9 9"><rect x=".4" y=".4" width="8.200" height="8.200" rx="1.200" fill="#2f6fe0" stroke="#1f55c0" stroke-width=".7"/><rect x="2" y="2" width="5" height="5" fill="#f0f5ff"/><rect x="3.100" y="3.500" width="2.800" height="2.400" fill="#2f6fe0"/></svg>
<svg class="ab" style="left:933.7px;top:68.7px" width="9" height="9.500" viewBox="0 0 9 9.500"><path d="M1.400 .9h6.200" fill="none" stroke="#2a5fcf" stroke-width="1.300"/><path d="M2.500 1v3.500h4V1" fill="#dfe8fb" stroke="#2a5fcf" stroke-width="1.200"/><path d="M.5 4.800h8" stroke="#2a5fcf" stroke-width="1.500"/><path d="M4.500 5v4.300" fill="none" stroke="#2a5fcf" stroke-width="1.400"/></svg>
<svg class="ab" style="left:945.5px;top:69px" width="9.700" height="9" viewBox="0 0 10 10" preserveAspectRatio="none"><rect x=".3" y=".3" width="9.400" height="9.400" rx="1.200" fill="#de5232" stroke="#c23a1c" stroke-width=".6"/><path d="M2.700 2.700l4.600 4.600M7.300 2.700l-4.600 4.600" stroke="#fff" stroke-width="1.500"/></svg>
<div class="ab" style="left:813px;top:83.500px;width:145px;height:332px;background:#fff;border:1px solid #9db5d3"></div>
<div class="ab" style="left:819.500px;top:90px;width:1px;height:68px;background:repeating-linear-gradient(#c8c8c8 0 1px,transparent 1px 2px)"></div>
<div class="ab" style="left:819.500px;top:90.3px;width:6px;height:1px;background:repeating-linear-gradient(90deg,#c8c8c8 0 1px,transparent 1px 2px)"></div>
<svg class="ab" style="left:826.5px;top:85.3px" width="12.5" height="10.5" ><use href="#i-pd"/></svg>
<div class="t" style="left:841.700px;top:85.5px">Preliminary Details</div>
<div class="ab" style="left:819.500px;top:103.7px;width:6px;height:1px;background:repeating-linear-gradient(90deg,#c8c8c8 0 1px,transparent 1px 2px)"></div>
<svg class="ab" style="left:826.5px;top:98.7px" width="12.5" height="10.5" ><use href="#i-as"/></svg>
<div class="t" style="left:841.700px;top:98.9px">Accept Site</div>
<div class="ab" style="left:819.500px;top:117.1px;width:6px;height:1px;background:repeating-linear-gradient(90deg,#c8c8c8 0 1px,transparent 1px 2px)"></div>
<svg class="ab" style="left:827.5px;top:111.6px" width="10.5" height="12" ><use href="#i-pl"/></svg>
<div class="t" style="left:841.700px;top:112.3px">Plumbing</div>
<div class="ab" style="left:819.500px;top:130.6px;width:6px;height:1px;background:repeating-linear-gradient(90deg,#c8c8c8 0 1px,transparent 1px 2px)"></div>
<svg class="ab" style="left:827px;top:124.6px" width="12" height="12" ><use href="#i-fl"/></svg>
<div class="t" style="left:841.700px;top:125.8px">Construction</div>
<div class="ab" style="left:819.500px;top:144.0px;width:6px;height:1px;background:repeating-linear-gradient(90deg,#c8c8c8 0 1px,transparent 1px 2px)"></div>
<svg class="ab" style="left:827px;top:138.0px" width="12" height="12" ><use href="#i-fl"/></svg>
<div class="t" style="left:841.700px;top:139.2px">Finishes</div>
<div class="ab" style="left:819.500px;top:157.5px;width:6px;height:1px;background:repeating-linear-gradient(90deg,#c8c8c8 0 1px,transparent 1px 2px)"></div>
<svg class="ab" style="left:826.5px;top:152.5px" width="12.5" height="10.5" ><use href="#i-pa"/></svg>
<div class="t" style="left:841.700px;top:152.7px">Paint &amp; Finishes</div>
<div class="ab" style="left:824px;top:151.300px;width:134px;height:13.500px;border:1px solid #222"></div>
<div class="ab" style="left:812px;top:419.5px;width:146px;height:16px;border:1px solid #d6d2c2;border-radius:3px;background:linear-gradient(#fdfdfb,#efede3)"></div><div class="t" style="left:815.5px;top:422.0px;letter-spacing:-0.330px">Filters Bar</div>
<svg class="ab" style="left:922px;top:422.8px" width="9" height="9" viewBox="0 0 9 9"><rect x=".4" y=".4" width="8.200" height="8.200" rx="1.200" fill="#2f6fe0" stroke="#1f55c0" stroke-width=".7"/><rect x="2" y="2" width="5" height="5" fill="#f0f5ff"/><rect x="3.100" y="3.500" width="2.800" height="2.400" fill="#2f6fe0"/></svg>
<svg class="ab" style="left:933.7px;top:422.7px" width="9" height="9.500" viewBox="0 0 9 9.500"><path d="M1.400 .9h6.200" fill="none" stroke="#2a5fcf" stroke-width="1.300"/><path d="M2.500 1v3.500h4V1" fill="#dfe8fb" stroke="#2a5fcf" stroke-width="1.200"/><path d="M.5 4.800h8" stroke="#2a5fcf" stroke-width="1.500"/><path d="M4.500 5v4.300" fill="none" stroke="#2a5fcf" stroke-width="1.400"/></svg>
<svg class="ab" style="left:945.5px;top:423px" width="9.700" height="9" viewBox="0 0 10 10" preserveAspectRatio="none"><rect x=".3" y=".3" width="9.400" height="9.400" rx="1.200" fill="#de5232" stroke="#c23a1c" stroke-width=".6"/><path d="M2.700 2.700l4.600 4.600M7.300 2.700l-4.600 4.600" stroke="#fff" stroke-width="1.500"/></svg>
<div class="t" style="left:819.500px;top:442px;font-weight:bold;font-size:8.700px;letter-spacing:0">Filter By Done:</div>
<div class="ab" style="left:818.3px;top:455px;width:90.5px;height:15.8px;background:#fff;border:1px solid #a5bad8"></div><div class="t" style="left:821.3px;top:458px">All</div><svg class="ab" style="left:896.3px;top:456.5px" width="11" height="12.8" viewBox="0 0 11 12" preserveAspectRatio="none"><rect x=".3" y=".3" width="10.400" height="11.400" rx="1" fill="#c3d2fa" stroke="#b4c6f4" stroke-width=".6"/><path d="M3 4.500l2.500 2.700L8 4.500" fill="none" stroke="#3c5ab0" stroke-width="1.500"/></svg>
<div class="t" style="left:819.500px;top:478px;font-weight:bold;font-size:8.700px;letter-spacing:0">Filter By Due Date:</div>
<svg class="ab" style="left:820px;top:496.5px" width="4.500" height="7" viewBox="0 0 4 7"><path d="M4 0v7L0 3.500z" fill="#000"/></svg>
<svg class="ab" style="left:874px;top:496.5px" width="4.500" height="7" viewBox="0 0 4 7"><path d="M0 0v7l4-3.500z" fill="#000"/></svg>
<svg class="ab" style="left:886.5px;top:496.5px" width="4.500" height="7" viewBox="0 0 4 7"><path d="M4 0v7L0 3.500z" fill="#000"/></svg>
<svg class="ab" style="left:920px;top:496.5px" width="4.500" height="7" viewBox="0 0 4 7"><path d="M0 0v7l4-3.500z" fill="#000"/></svg>
<div class="t" style="left:833.500px;top:495px;font-size:8.600px">Октябрь</div>
<div class="t" style="left:896.500px;top:495px;font-size:8.600px">2005</div>
<div class="hl" style="left:816px;top:505.500px;width:112px;background:#c5c2b2"></div>
<div class="t" style="left:827.3px;width:12px;text-align:center;top:508px;font-size:8.600px">П</div>
<div class="t" style="left:840.85px;width:12px;text-align:center;top:508px;font-size:8.600px">В</div>
<div class="t" style="left:854.4px;width:12px;text-align:center;top:508px;font-size:8.600px">С</div>
<div class="t" style="left:867.95px;width:12px;text-align:center;top:508px;font-size:8.600px">Ч</div>
<div class="t" style="left:881.5px;width:12px;text-align:center;top:508px;font-size:8.600px">П</div>
<div class="t" style="left:895.05px;width:12px;text-align:center;top:508px;font-size:8.600px">С</div>
<div class="t" style="left:908.6px;width:12px;text-align:center;top:508px;font-size:8.600px">В</div>
<div class="hl" style="left:825px;top:518px;width:94px;background:#c5c2b2"></div>
<div class="t" style="left:824.9px;width:12px;text-align:right;top:520.0px;color:#aaa89b;font-size:9.300px;letter-spacing:0;transform:scaleX(.9);transform-origin:100% 50%">26</div>
<div class="t" style="left:838.45px;width:12px;text-align:right;top:520.0px;color:#aaa89b;font-size:9.300px;letter-spacing:0;transform:scaleX(.9);transform-origin:100% 50%">27</div>
<div class="t" style="left:852.0px;width:12px;text-align:right;top:520.0px;color:#aaa89b;font-size:9.300px;letter-spacing:0;transform:scaleX(.9);transform-origin:100% 50%">28</div>
<div class="t" style="left:865.5500000000001px;width:12px;text-align:right;top:520.0px;color:#aaa89b;font-size:9.300px;letter-spacing:0;transform:scaleX(.9);transform-origin:100% 50%">29</div>
<div class="t" style="left:879.1px;width:12px;text-align:right;top:520.0px;color:#aaa89b;font-size:9.300px;letter-spacing:0;transform:scaleX(.9);transform-origin:100% 50%">30</div>
<div class="t" style="left:892.65px;width:12px;text-align:right;top:520.0px;color:#000;font-size:9.300px;letter-spacing:0;transform:scaleX(.9);transform-origin:100% 50%">1</div>
<div class="t" style="left:906.2px;width:12px;text-align:right;top:520.0px;color:#000;font-size:9.300px;letter-spacing:0;transform:scaleX(.9);transform-origin:100% 50%">2</div>
<div class="t" style="left:824.9px;width:12px;text-align:right;top:531.3px;color:#000;font-size:9.300px;letter-spacing:0;transform:scaleX(.9);transform-origin:100% 50%">3</div>
<div class="t" style="left:838.45px;width:12px;text-align:right;top:531.3px;color:#000;font-size:9.300px;letter-spacing:0;transform:scaleX(.9);transform-origin:100% 50%">4</div>
<div class="t" style="left:852.0px;width:12px;text-align:right;top:531.3px;color:#000;font-size:9.300px;letter-spacing:0;transform:scaleX(.9);transform-origin:100% 50%">5</div>
<div class="t" style="left:865.5500000000001px;width:12px;text-align:right;top:531.3px;color:#000;font-size:9.300px;letter-spacing:0;transform:scaleX(.9);transform-origin:100% 50%">6</div>
<div class="ab" style="left:879px;top:531.1999999999999px;width:13.500px;height:10.800px;background:#316ac5;border:1px solid #b0302a"></div>
<div class="t" style="left:879.1px;width:12px;text-align:right;top:531.3px;color:#fff;font-size:9.300px;letter-spacing:0;transform:scaleX(.9);transform-origin:100% 50%">7</div>
<div class="t" style="left:892.65px;width:12px;text-align:right;top:531.3px;color:#000;font-size:9.300px;letter-spacing:0;transform:scaleX(.9);transform-origin:100% 50%">8</div>
<div class="t" style="left:906.2px;width:12px;text-align:right;top:531.3px;color:#000;font-size:9.300px;letter-spacing:0;transform:scaleX(.9);transform-origin:100% 50%">9</div>
<div class="t" style="left:824.9px;width:12px;text-align:right;top:542.6px;color:#000;font-size:9.300px;letter-spacing:0;transform:scaleX(.9);transform-origin:100% 50%">10</div>
<div class="t" style="left:838.45px;width:12px;text-align:right;top:542.6px;color:#000;font-size:9.300px;letter-spacing:0;transform:scaleX(.9);transform-origin:100% 50%">11</div>
<div class="t" style="left:852.0px;width:12px;text-align:right;top:542.6px;color:#000;font-size:9.300px;letter-spacing:0;transform:scaleX(.9);transform-origin:100% 50%">12</div>
<div class="t" style="left:865.5500000000001px;width:12px;text-align:right;top:542.6px;color:#000;font-size:9.300px;letter-spacing:0;transform:scaleX(.9);transform-origin:100% 50%">13</div>
<div class="t" style="left:879.1px;width:12px;text-align:right;top:542.6px;color:#000;font-size:9.300px;letter-spacing:0;transform:scaleX(.9);transform-origin:100% 50%">14</div>
<div class="t" style="left:892.65px;width:12px;text-align:right;top:542.6px;color:#000;font-size:9.300px;letter-spacing:0;transform:scaleX(.9);transform-origin:100% 50%">15</div>
<div class="t" style="left:906.2px;width:12px;text-align:right;top:542.6px;color:#000;font-size:9.300px;letter-spacing:0;transform:scaleX(.9);transform-origin:100% 50%">16</div>
<div class="t" style="left:824.9px;width:12px;text-align:right;top:553.9px;color:#000;font-size:9.300px;letter-spacing:0;transform:scaleX(.9);transform-origin:100% 50%">17</div>
<div class="t" style="left:838.45px;width:12px;text-align:right;top:553.9px;color:#000;font-size:9.300px;letter-spacing:0;transform:scaleX(.9);transform-origin:100% 50%">18</div>
<div class="t" style="left:852.0px;width:12px;text-align:right;top:553.9px;color:#000;font-size:9.300px;letter-spacing:0;transform:scaleX(.9);transform-origin:100% 50%">19</div>
<div class="t" style="left:865.5500000000001px;width:12px;text-align:right;top:553.9px;color:#000;font-size:9.300px;letter-spacing:0;transform:scaleX(.9);transform-origin:100% 50%">20</div>
<div class="t" style="left:879.1px;width:12px;text-align:right;top:553.9px;color:#000;font-size:9.300px;letter-spacing:0;transform:scaleX(.9);transform-origin:100% 50%">21</div>
<div class="t" style="left:892.65px;width:12px;text-align:right;top:553.9px;color:#000;font-size:9.300px;letter-spacing:0;transform:scaleX(.9);transform-origin:100% 50%">22</div>
<div class="t" style="left:906.2px;width:12px;text-align:right;top:553.9px;color:#000;font-size:9.300px;letter-spacing:0;transform:scaleX(.9);transform-origin:100% 50%">23</div>
<div class="t" style="left:824.9px;width:12px;text-align:right;top:565.2px;color:#000;font-size:9.300px;letter-spacing:0;transform:scaleX(.9);transform-origin:100% 50%">24</div>
<div class="t" style="left:838.45px;width:12px;text-align:right;top:565.2px;color:#000;font-size:9.300px;letter-spacing:0;transform:scaleX(.9);transform-origin:100% 50%">25</div>
<div class="t" style="left:852.0px;width:12px;text-align:right;top:565.2px;color:#000;font-size:9.300px;letter-spacing:0;transform:scaleX(.9);transform-origin:100% 50%">26</div>
<div class="t" style="left:865.5500000000001px;width:12px;text-align:right;top:565.2px;color:#000;font-size:9.300px;letter-spacing:0;transform:scaleX(.9);transform-origin:100% 50%">27</div>
<div class="t" style="left:879.1px;width:12px;text-align:right;top:565.2px;color:#000;font-size:9.300px;letter-spacing:0;transform:scaleX(.9);transform-origin:100% 50%">28</div>
<div class="t" style="left:892.65px;width:12px;text-align:right;top:565.2px;color:#000;font-size:9.300px;letter-spacing:0;transform:scaleX(.9);transform-origin:100% 50%">29</div>
<div class="t" style="left:906.2px;width:12px;text-align:right;top:565.2px;color:#000;font-size:9.300px;letter-spacing:0;transform:scaleX(.9);transform-origin:100% 50%">30</div>
<div class="t" style="left:824.9px;width:12px;text-align:right;top:576.5px;color:#000;font-size:9.300px;letter-spacing:0;transform:scaleX(.9);transform-origin:100% 50%">31</div>
<div class="t" style="left:838.45px;width:12px;text-align:right;top:576.5px;color:#aaa89b;font-size:9.300px;letter-spacing:0;transform:scaleX(.9);transform-origin:100% 50%">1</div>
<div class="t" style="left:852.0px;width:12px;text-align:right;top:576.5px;color:#aaa89b;font-size:9.300px;letter-spacing:0;transform:scaleX(.9);transform-origin:100% 50%">2</div>
<div class="t" style="left:865.5500000000001px;width:12px;text-align:right;top:576.5px;color:#aaa89b;font-size:9.300px;letter-spacing:0;transform:scaleX(.9);transform-origin:100% 50%">3</div>
<div class="t" style="left:879.1px;width:12px;text-align:right;top:576.5px;color:#aaa89b;font-size:9.300px;letter-spacing:0;transform:scaleX(.9);transform-origin:100% 50%">4</div>
<div class="t" style="left:892.65px;width:12px;text-align:right;top:576.5px;color:#aaa89b;font-size:9.300px;letter-spacing:0;transform:scaleX(.9);transform-origin:100% 50%">5</div>
<div class="t" style="left:906.2px;width:12px;text-align:right;top:576.5px;color:#aaa89b;font-size:9.300px;letter-spacing:0;transform:scaleX(.9);transform-origin:100% 50%">6</div>
<div class="hl" style="left:825px;top:587px;width:94px;background:#c5c2b2"></div>
<div class="ab" style="left:830px;top:592px;width:35.5px;height:14px;border:1px solid #1f3f7a;border-radius:2.500px;background:linear-gradient(#ffffff,#f3f2ea 70%,#dcd9c8);text-align:center;line-height:11.5px;font-size:8.600px">Today</div>
<div class="ab" style="left:879.5px;top:592px;width:36px;height:14px;border:1px solid #1f3f7a;border-radius:2.500px;background:linear-gradient(#ffffff,#f3f2ea 70%,#dcd9c8);text-align:center;line-height:11.5px;font-size:8.600px">Clear</div>
<div class="ab" style="left:817.7px;top:617.5px;width:109px;height:15px;background:#fff;border:1px solid #a5bad8"></div><div class="t" style="left:820.7px;top:620.5px">is less than or equal to</div><svg class="ab" style="left:914.2px;top:619.0px" width="11" height="12" viewBox="0 0 11 12" preserveAspectRatio="none"><rect x=".3" y=".3" width="10.400" height="11.400" rx="1" fill="#c3d2fa" stroke="#b4c6f4" stroke-width=".6"/><path d="M3 4.500l2.500 2.700L8 4.500" fill="none" stroke="#3c5ab0" stroke-width="1.500"/></svg>
<svg class="ab" style="left:178px;top:40.5px" width="18" height="19" ><use href="#i-ct"/></svg>
<svg class="ab" style="left:201.500px;top:40.500px" width="19" height="19" viewBox="0 0 19 19"><rect x="1" y="3.500" width="13" height="14" fill="#f1f1ef" stroke="#c4c4be" stroke-width=".9"/><path d="M5 15 6.500 10.500 15 1.500l2.500 2.500L9 13z" fill="#9a9a96" stroke="#7d7d78" stroke-width=".5"/><path d="M5 15l2-0.700-1.300-1.300z" fill="#666"/></svg>
<svg class="ab" style="left:225.500px;top:40.500px" width="19" height="19" viewBox="0 0 19 19"><path d="M7 9.500h10.500c0 4-.6 6.500-1.600 8.300-.3.500-.8.700-1.400.7h-4.500c-.6 0-1.100-.2-1.400-.7C7.600 16 7 13.500 7 9.500z" fill="#d6d6d2" stroke="#b4b4ae" stroke-width=".7"/><ellipse cx="12.250" cy="9.500" rx="5.250" ry="1.300" fill="#c2c2bc"/><path d="M1.500 5.500C2 3 4 1.500 6.500 2l-.6-1.400 3.300 1.800L6.800 5l-.2-1.400C5 3.400 4 4.200 3.600 6z" fill="#a6a6a0"/><path d="M9.500 3c1.800-.6 3.800.2 4.800 2l1.200-.8-.3 3.600-3.300-1.400 1.200-.7c-.7-1.100-1.800-1.500-3-1.100z" fill="#9c9c96"/></svg>
<div class="vl" style="left:249.2px;top:40px;height:21px;background:#d2ceba"></div>
<svg class="ab" style="left:254.500px;top:44px" width="19" height="13" viewBox="0 0 19 13"><path d="M.8 4.500C2.500 2 5 1 7.500 1.200l3 1.600-1 6.200-4 2.500-2-.8z" fill="#f2c84c" stroke="#c2922a" stroke-width=".6"/><path d="M9.500 2.500 14 1.500c2 .5 3.500 2 4.300 4l-1.300 5-4 1-2.500-1.500z" fill="#f6d56a" stroke="#c2922a" stroke-width=".6"/><path d="M2.500 4C4 2.800 5.500 2.300 7 2.400" stroke="#fbeeb0" stroke-width=".9" fill="none"/><circle cx="7.600" cy="9.500" r="2.300" fill="#c2dcf4" stroke="#6a7c9c" stroke-width=".8"/><circle cx="15.600" cy="8.300" r="2.100" fill="#c2dcf4" stroke="#6a7c9c" stroke-width=".8"/></svg>
<div class="vl" style="left:278.2px;top:40px;height:21px;background:#d2ceba"></div>
<svg class="ab" style="left:285px;top:42px" width="16.500" height="16.500" viewBox="0 0 16.500 16.500"><rect x=".5" y=".5" width="15.500" height="15.500" rx="1.800" fill="url(#gBtnG)" stroke="#cfcfca" stroke-width=".9"/><path d="M4 6.300 8.200 10.500l4.200-4.200" fill="none" stroke="#fff" stroke-width="2"/></svg>
<svg class="ab" style="left:309px;top:42px" width="16.500" height="16.500" viewBox="0 0 16.500 16.500"><rect x=".5" y=".5" width="15.500" height="15.500" rx="1.800" fill="url(#gBtnG)" stroke="#cfcfca" stroke-width=".9"/><path d="M4 10.500 8.200 6.300l4.200 4.200" fill="none" stroke="#fff" stroke-width="2"/></svg>
<div class="vl" style="left:331.5px;top:40px;height:21px;background:#d2ceba"></div>
<svg class="ab" style="left:337.5px;top:42px" width="16.500" height="16.500" viewBox="0 0 16.500 16.500"><rect x=".5" y=".5" width="15.500" height="15.500" rx="1.800" fill="url(#gBtnG)" stroke="#cfcfca" stroke-width=".9"/><path d="M4.500 4.300 8.200 8l3.700-3.700M4.500 8.800l3.700 3.700 3.700-3.700" fill="none" stroke="#fff" stroke-width="2"/></svg>
<svg class="ab" style="left:362px;top:42px" width="16.500" height="16.500" viewBox="0 0 16.500 16.500"><rect x=".5" y=".5" width="15.500" height="15.500" rx="1.800" fill="url(#gBtnG)" stroke="#cfcfca" stroke-width=".9"/><path d="M4.500 8 8.200 4.300 11.900 8M4.500 12.500 8.200 8.800l3.700 3.700" fill="none" stroke="#fff" stroke-width="2"/></svg>
<div class="vl" style="left:384.5px;top:40px;height:21px;background:#d2ceba"></div>
<svg class="ab" style="left:390px;top:41px" width="19" height="17" viewBox="0 0 19 17"><path d="M4.500 8h9v8h-9z" fill="#e8f0fa" stroke="#9ab4d8" stroke-width=".7"/><path d="M6 11h6M6 13h6" stroke="#9ab4d8" stroke-width=".7"/><path d="M3.500 1.500 12 .8l6.300 8.700-8.800 2z" fill="#43b23c" stroke="#2a8a26" stroke-width=".7"/><path d="M3.500 1.500 1 15.500l3 .5 1.500-8z" fill="#6fcf62" stroke="#2a8a26" stroke-width=".7"/></svg>
<svg class="ab" style="left:414px;top:57px" width="5" height="3" viewBox="0 0 5 3"><path d="M0 0h5L2.500 3z" fill="#000"/></svg>
<div class="ab" style="left:424px;top:41px;width:2px;height:19px;background:repeating-linear-gradient(#a8a592 0 1px,transparent 1px 3px)"></div>
<svg class="ab" style="left:432px;top:41.5px" width="18" height="15.5" viewBox="0 0 18 16"><defs><linearGradient id="bf432" x1="0" y1="0" x2="0" y2="1"><stop offset="0" stop-color="#fff"/><stop offset="1" stop-color="#dde8f8"/></linearGradient></defs><path d="M.7 3.500h15.600v11.800H.7z" fill="url(#bf432)" stroke="#7aa6e0" stroke-width=".9"/><path d="M.7 1.200h6l1.200 2.300H.7z" fill="#4f98ea"/><path d="M.7 3.300h15.600v2.200H.7z" fill="#4f98ea"/><path d="M10 2.300h4.500V.2L18 3.500l-3.500 3.300V4.700H10z" fill="#3fb23c" stroke="#2a8a26" stroke-width=".4"/></svg>
<svg class="ab" style="left:455.500px;top:40.500px" width="19" height="18" viewBox="0 0 19 18"><g fill="#4a86dc" stroke="#2a5fb8" stroke-width=".5"><rect x=".8" y="4.500" width="5" height="3"/><rect x="7.500" y="8" width="5.500" height="3"/><rect x="7.500" y="12" width="5.500" height="3"/><rect x="7.500" y="16" width="5.500" height="1.800"/></g><path d="M3.300 7.500v9.500h4M3.300 9.500h4M3.300 13.500h4" fill="none" stroke="#4a86dc" stroke-width=".9"/><path d="M14.500 0v7M11 3.500h7" stroke="#36b034" stroke-width="2.300"/></svg>
<svg class="ab" style="left:480.5px;top:41.5px" width="18" height="15.5" viewBox="0 0 18 16"><defs><linearGradient id="bf480" x1="0" y1="0" x2="0" y2="1"><stop offset="0" stop-color="#fff"/><stop offset="1" stop-color="#dde8f8"/></linearGradient></defs><path d="M.7 3.500h15.600v11.800H.7z" fill="url(#bf480)" stroke="#7aa6e0" stroke-width=".9"/><path d="M.7 1.200h6l1.200 2.300H.7z" fill="#4f98ea"/><path d="M.7 3.300h15.600v2.200H.7z" fill="#4f98ea"/><path d="M5.500 8h7M5.500 10.500h7" stroke="#a8bcd8" stroke-width=".6"/><path d="M5 12.500 6.500 9 15 .5l2.200 2.200L8.700 11.200z" fill="#f0c040" stroke="#b07818" stroke-width=".5"/><path d="M15 .5l2.200 2.200" stroke="#e0463a" stroke-width="2"/></svg>
<svg class="ab" style="left:504.5px;top:41.5px" width="18" height="15.5" viewBox="0 0 18 16"><defs><linearGradient id="bf504" x1="0" y1="0" x2="0" y2="1"><stop offset="0" stop-color="#fff"/><stop offset="1" stop-color="#dde8f8"/></linearGradient></defs><path d="M.7 3.500h15.600v11.800H.7z" fill="url(#bf504)" stroke="#7aa6e0" stroke-width=".9"/><path d="M.7 1.200h6l1.200 2.300H.7z" fill="#4f98ea"/><path d="M.7 3.300h15.600v2.200H.7z" fill="#4f98ea"/><path d="M10.500 9l6.500 6.500M17 9l-6.500 6.500" stroke="#e0463a" stroke-width="1.800"/></svg>
<div class="vl" style="left:527.0px;top:40px;height:21px;background:#d2ceba"></div>
<svg class="ab" style="left:534px;top:43px" width="18" height="14.5" viewBox="0 0 18 16"><defs><linearGradient id="bf534" x1="0" y1="0" x2="0" y2="1"><stop offset="0" stop-color="#fff"/><stop offset="1" stop-color="#dde8f8"/></linearGradient></defs><path d="M.7 3.500h15.600v11.800H.7z" fill="url(#bf534)" stroke="#c4c4be" stroke-width=".9"/><path d="M.7 1.200h6l1.200 2.300H.7z" fill="#c9c9c5"/><path d="M.7 3.300h15.600v2.200H.7z" fill="#c9c9c5"/><path d="M7.500 7.300 3.300 10.700l4.200 3.400v-2h3V9.300h-3z" fill="#bcbcb8"/></svg>
<svg class="ab" style="left:557.5px;top:43px" width="18" height="14.5" viewBox="0 0 18 16"><defs><linearGradient id="bf557" x1="0" y1="0" x2="0" y2="1"><stop offset="0" stop-color="#fff"/><stop offset="1" stop-color="#dde8f8"/></linearGradient></defs><path d="M.7 3.500h15.600v11.800H.7z" fill="url(#bf557)" stroke="#7aa6e0" stroke-width=".9"/><path d="M.7 1.200h6l1.200 2.300H.7z" fill="#4f98ea"/><path d="M.7 3.300h15.600v2.200H.7z" fill="#4f98ea"/><path d="M10.500 7.300l4.200 3.400-4.200 3.400v-2H7.500V9.300h3z" fill="#3a78e4"/></svg>
<div class="vl" style="left:580.3px;top:40px;height:21px;background:#d2ceba"></div>
<svg class="ab" style="left:586.5px;top:43px" width="18" height="14.5" viewBox="0 0 18 16"><defs><linearGradient id="bf586" x1="0" y1="0" x2="0" y2="1"><stop offset="0" stop-color="#fff"/><stop offset="1" stop-color="#dde8f8"/></linearGradient></defs><path d="M.7 3.500h15.600v11.800H.7z" fill="url(#bf586)" stroke="#7aa6e0" stroke-width=".9"/><path d="M.7 1.200h6l1.200 2.300H.7z" fill="#4f98ea"/><path d="M.7 3.300h15.600v2.200H.7z" fill="#4f98ea"/><path d="M8.500 6.800 12 10.600h-2v3H7v-3H5z" fill="#3a78e4"/></svg>
<svg class="ab" style="left:610.5px;top:43px" width="18" height="14.5" viewBox="0 0 18 16"><defs><linearGradient id="bf610" x1="0" y1="0" x2="0" y2="1"><stop offset="0" stop-color="#fff"/><stop offset="1" stop-color="#dde8f8"/></linearGradient></defs><path d="M.7 3.500h15.600v11.800H.7z" fill="url(#bf610)" stroke="#c4c4be" stroke-width=".9"/><path d="M.7 1.200h6l1.200 2.300H.7z" fill="#c9c9c5"/><path d="M.7 3.300h15.600v2.200H.7z" fill="#c9c9c5"/><path d="M8.500 13.800 12 10H10V7H7v3H5z" fill="#bcbcb8"/></svg>
<svg class="ab" style="left:634px;top:42.500px" width="19" height="15" viewBox="0 0 19 15"><path d="M4 14.500V5H1.300L5 1l3.700 4H6v9.500z" fill="#5a9af0" stroke="#2a5fb8" stroke-width=".7"/><path d="M9 1h3v2.600H9zM9 4.200h4.500v2.600H9zM9 7.400h6.300V10H9zM9 10.600h9v3.600H9z" fill="#4cb848" stroke="#2a8a26" stroke-width=".5"/></svg>
<svg class="ab" style="left:657.5px;top:57px" width="5" height="3" viewBox="0 0 5 3"><path d="M0 0h5L2.500 3z" fill="#000"/></svg>
<div class="ab" style="left:668px;top:41px;width:2px;height:19px;background:repeating-linear-gradient(#a8a592 0 1px,transparent 1px 3px)"></div>
<div class="ab" style="left:673px;top:43.500px;width:113.500px;height:13.500px;background:#fff"></div>
<div class="t" style="left:674.600px;top:45.500px">Default Task View Layout</div>
<svg class="ab" style="left:776.500px;top:44px" width="10" height="12.500" viewBox="0 0 10 12.500"><rect x=".3" y=".3" width="9.400" height="11.900" rx="1" fill="#c3d2fa" stroke="#b4c6f4" stroke-width=".6"/><path d="M2.500 4.800 5 7.500l2.500-2.700" fill="none" stroke="#3c5ab0" stroke-width="1.500"/></svg>
<svg class="ab" style="left:790px;top:41px" width="19" height="18" viewBox="0 0 19 18"><path d="M8 .8h6l3.500 3.500v9H8z" fill="#f2f6fc" stroke="#a8bedc" stroke-width=".7"/><path d="M.8 7.800h10v9.500H.8z" fill="#8a84da" stroke="#5f5ab8" stroke-width=".7"/><rect x="2.800" y="8.200" width="6" height="4.600" fill="#f4f5fc"/><rect x="3.600" y="14.300" width="4" height="3" fill="#cfd0f2"/><path d="M9 13.500c.5-3.500 2.500-5.500 5-6L13 5.500l5 1.500-2.500 4.500-.8-1.800c-2 .5-3.500 2-5.700 3.800z" fill="#43b23c" stroke="#2a8a26" stroke-width=".5"/></svg>
<svg class="ab" style="left:816px;top:43px" width="15" height="14" viewBox="0 0 15 14"><path d="M1.500 1.500 13.500 12.500M13.500 1.500 1.500 12.500" stroke="#c2c2bc" stroke-width="3"/></svg>
<svg class="ab" style="left:837.5px;top:57px" width="5" height="3" viewBox="0 0 5 3"><path d="M0 0h5L2.500 3z" fill="#000"/></svg>
</div></body></html>
